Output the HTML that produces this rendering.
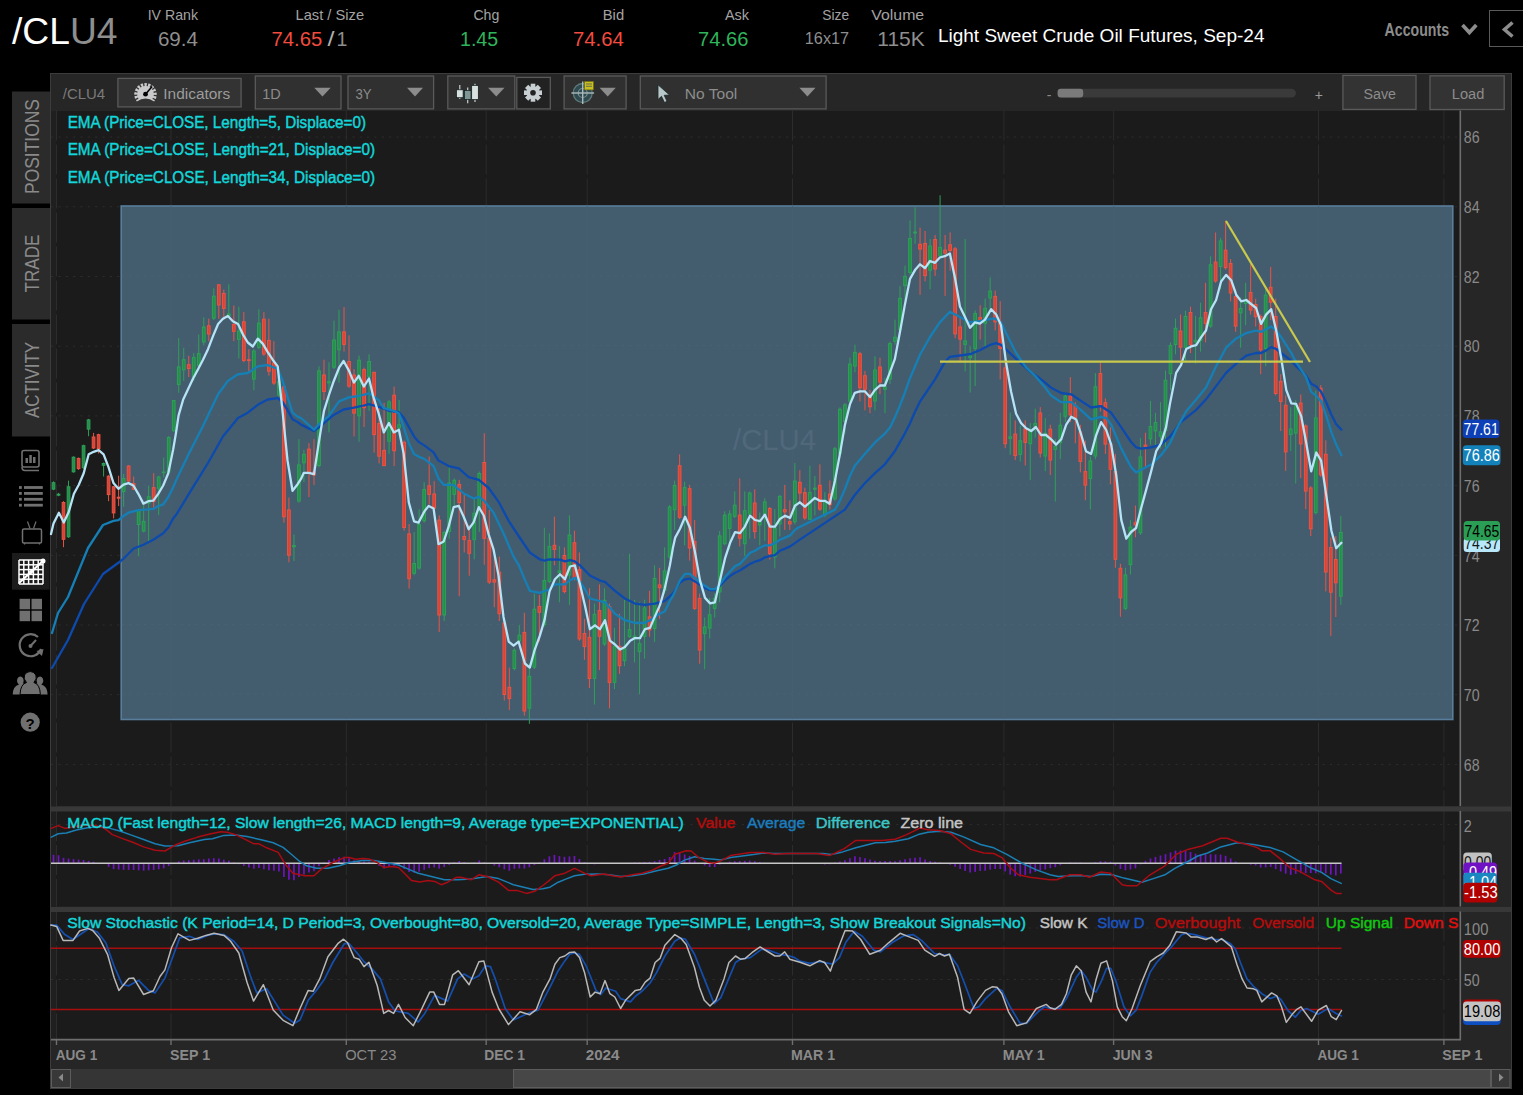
<!DOCTYPE html>
<html><head><meta charset="utf-8"><style>
html,body{margin:0;padding:0;background:#000;width:1523px;height:1095px;overflow:hidden;position:relative}
text{font-family:"Liberation Sans", sans-serif}
</style></head><body>
<svg width="1523" height="1095" viewBox="0 0 1523 1095" style="position:absolute;left:0;top:0">
<rect x="0" y="0" width="1523" height="1095" fill="#000"/>
<text x="12" y="43.5" font-size="36.5" textLength="105.5" lengthAdjust="spacingAndGlyphs"><tspan fill="#ffffff">/CL</tspan><tspan fill="#8e8e8e">U4</tspan></text>
<text x="198" y="20" font-size="14.5" fill="#a3a3a3" text-anchor="end" font-weight="normal" textLength="50.3" lengthAdjust="spacingAndGlyphs" >IV Rank</text>
<text x="198" y="45.7" font-size="19.5" fill="#8e8e8e" text-anchor="end" font-weight="normal" textLength="40.1" lengthAdjust="spacingAndGlyphs" >69.4</text>
<text x="364.1" y="20" font-size="14.5" fill="#a3a3a3" text-anchor="end" font-weight="normal" textLength="68.6" lengthAdjust="spacingAndGlyphs" >Last / Size</text>
<text x="271.6" y="45.7" font-size="19.5" fill="#f24b3f" text-anchor="start" font-weight="normal" textLength="50.7" lengthAdjust="spacingAndGlyphs" >74.65</text>
<text x="327.4" y="45.7" font-size="19.5" fill="#b0b0b0" text-anchor="start" font-weight="normal" textLength="7" lengthAdjust="spacingAndGlyphs" >/</text>
<text x="347.4" y="45.7" font-size="19.5" fill="#8e8e8e" text-anchor="end" font-weight="normal" >1</text>
<text x="499.3" y="20" font-size="14.5" fill="#a3a3a3" text-anchor="end" font-weight="normal" textLength="25.9" lengthAdjust="spacingAndGlyphs" >Chg</text>
<text x="498.1" y="45.7" font-size="19.5" fill="#2fb45b" text-anchor="end" font-weight="normal" textLength="38.1" lengthAdjust="spacingAndGlyphs" >1.45</text>
<text x="624.1" y="20" font-size="14.5" fill="#a3a3a3" text-anchor="end" font-weight="normal" textLength="21.3" lengthAdjust="spacingAndGlyphs" >Bid</text>
<text x="623.8" y="45.7" font-size="19.5" fill="#f24b3f" text-anchor="end" font-weight="normal" textLength="50.9" lengthAdjust="spacingAndGlyphs" >74.64</text>
<text x="749.1" y="20" font-size="14.5" fill="#a3a3a3" text-anchor="end" font-weight="normal" textLength="24.2" lengthAdjust="spacingAndGlyphs" >Ask</text>
<text x="748.4" y="45.7" font-size="19.5" fill="#2fb45b" text-anchor="end" font-weight="normal" textLength="50.4" lengthAdjust="spacingAndGlyphs" >74.66</text>
<text x="849.1" y="20" font-size="14.5" fill="#a3a3a3" text-anchor="end" font-weight="normal" textLength="26.8" lengthAdjust="spacingAndGlyphs" >Size</text>
<text x="849.1" y="43.5" font-size="16" fill="#8e8e8e" text-anchor="end" font-weight="normal" textLength="44.3" lengthAdjust="spacingAndGlyphs" >16x17</text>
<text x="924.2" y="20" font-size="14.5" fill="#a3a3a3" text-anchor="end" font-weight="normal" textLength="52.9" lengthAdjust="spacingAndGlyphs" >Volume</text>
<text x="924.8" y="45.7" font-size="21" fill="#8e8e8e" text-anchor="end" font-weight="normal" textLength="47.5" lengthAdjust="spacingAndGlyphs" >115K</text>
<text x="937.9" y="42.3" font-size="18.3" fill="#ffffff" text-anchor="start" font-weight="normal" textLength="326.6" lengthAdjust="spacingAndGlyphs" >Light Sweet Crude Oil Futures, Sep-24</text>
<text x="1384.6" y="35.6" font-size="18.5" fill="#8c8c8c" text-anchor="start" font-weight="bold" textLength="64.4" lengthAdjust="spacingAndGlyphs" >Accounts</text>
<polyline points="1462.5,25 1469.4,32.5 1476.3,25" fill="none" stroke="#8c8c8c" stroke-width="3.6"/>
<rect x="1489.5" y="10.5" width="40" height="36" fill="none" stroke="#5a5a5a" stroke-width="1"/>
<polyline points="1512.5,22.5 1504.5,29.5 1512.5,36.5" fill="none" stroke="#8c8c8c" stroke-width="3.6"/>
<rect x="12" y="91.5" width="38" height="112" fill="#2b2b2b"/>
<rect x="12" y="208" width="38" height="111.5" fill="#2b2b2b"/>
<rect x="12" y="324" width="38" height="112.5" fill="#2b2b2b"/>
<text x="0" y="0" font-size="20" fill="#8a8a8a" text-anchor="middle" textLength="95" lengthAdjust="spacingAndGlyphs" transform="translate(38.8,146.5) rotate(-90)">POSITIONS</text>
<text x="0" y="0" font-size="20" fill="#8a8a8a" text-anchor="middle" textLength="58" lengthAdjust="spacingAndGlyphs" transform="translate(38.8,263.5) rotate(-90)">TRADE</text>
<text x="0" y="0" font-size="20" fill="#8a8a8a" text-anchor="middle" textLength="76" lengthAdjust="spacingAndGlyphs" transform="translate(38.8,380) rotate(-90)">ACTIVITY</text>
<rect x="50.5" y="73.5" width="1461" height="1015" fill="#262626" stroke="#3c3c3c" stroke-width="1"/>
<rect x="51" y="111" width="1409" height="695" fill="#1b1b1b"/>
<rect x="51" y="811" width="1409" height="95.5" fill="#1b1b1b"/>
<rect x="51" y="911.5" width="1409" height="128" fill="#1b1b1b"/>
<rect x="51" y="111" width="5" height="928.5" fill="#1f1f1f"/>
<line x1="51" y1="764.4" x2="1460" y2="764.4" stroke="#2d2d2d" stroke-width="1" stroke-dasharray="2.2,5.15"/>
<line x1="51" y1="694.7" x2="1460" y2="694.7" stroke="#2d2d2d" stroke-width="1" stroke-dasharray="2.2,5.15"/>
<line x1="51" y1="625.0" x2="1460" y2="625.0" stroke="#2d2d2d" stroke-width="1" stroke-dasharray="2.2,5.15"/>
<line x1="51" y1="555.3" x2="1460" y2="555.3" stroke="#2d2d2d" stroke-width="1" stroke-dasharray="2.2,5.15"/>
<line x1="51" y1="485.6" x2="1460" y2="485.6" stroke="#2d2d2d" stroke-width="1" stroke-dasharray="2.2,5.15"/>
<line x1="51" y1="415.9" x2="1460" y2="415.9" stroke="#2d2d2d" stroke-width="1" stroke-dasharray="2.2,5.15"/>
<line x1="51" y1="346.2" x2="1460" y2="346.2" stroke="#2d2d2d" stroke-width="1" stroke-dasharray="2.2,5.15"/>
<line x1="51" y1="276.5" x2="1460" y2="276.5" stroke="#2d2d2d" stroke-width="1" stroke-dasharray="2.2,5.15"/>
<line x1="51" y1="206.8" x2="1460" y2="206.8" stroke="#2d2d2d" stroke-width="1" stroke-dasharray="2.2,5.15"/>
<line x1="51" y1="137.1" x2="1460" y2="137.1" stroke="#2d2d2d" stroke-width="1" stroke-dasharray="2.2,5.15"/>
<line x1="56.5" y1="110.5" x2="56.5" y2="806" stroke="#2c2c2c" stroke-width="1" stroke-dasharray="30,4"/>
<line x1="56.5" y1="811" x2="56.5" y2="906.5" stroke="#2c2c2c" stroke-width="1" stroke-dasharray="30,4"/>
<line x1="56.5" y1="911.5" x2="56.5" y2="1039.5" stroke="#2c2c2c" stroke-width="1" stroke-dasharray="30,4"/>
<line x1="171" y1="110.5" x2="171" y2="806" stroke="#2c2c2c" stroke-width="1" stroke-dasharray="30,4"/>
<line x1="171" y1="811" x2="171" y2="906.5" stroke="#2c2c2c" stroke-width="1" stroke-dasharray="30,4"/>
<line x1="171" y1="911.5" x2="171" y2="1039.5" stroke="#2c2c2c" stroke-width="1" stroke-dasharray="30,4"/>
<line x1="346.3" y1="110.5" x2="346.3" y2="806" stroke="#2c2c2c" stroke-width="1" stroke-dasharray="30,4"/>
<line x1="346.3" y1="811" x2="346.3" y2="906.5" stroke="#2c2c2c" stroke-width="1" stroke-dasharray="30,4"/>
<line x1="346.3" y1="911.5" x2="346.3" y2="1039.5" stroke="#2c2c2c" stroke-width="1" stroke-dasharray="30,4"/>
<line x1="486.2" y1="110.5" x2="486.2" y2="806" stroke="#2c2c2c" stroke-width="1" stroke-dasharray="30,4"/>
<line x1="486.2" y1="811" x2="486.2" y2="906.5" stroke="#2c2c2c" stroke-width="1" stroke-dasharray="30,4"/>
<line x1="486.2" y1="911.5" x2="486.2" y2="1039.5" stroke="#2c2c2c" stroke-width="1" stroke-dasharray="30,4"/>
<line x1="587.2" y1="110.5" x2="587.2" y2="806" stroke="#2c2c2c" stroke-width="1" stroke-dasharray="30,4"/>
<line x1="587.2" y1="811" x2="587.2" y2="906.5" stroke="#2c2c2c" stroke-width="1" stroke-dasharray="30,4"/>
<line x1="587.2" y1="911.5" x2="587.2" y2="1039.5" stroke="#2c2c2c" stroke-width="1" stroke-dasharray="30,4"/>
<line x1="792.5" y1="110.5" x2="792.5" y2="806" stroke="#2c2c2c" stroke-width="1" stroke-dasharray="30,4"/>
<line x1="792.5" y1="811" x2="792.5" y2="906.5" stroke="#2c2c2c" stroke-width="1" stroke-dasharray="30,4"/>
<line x1="792.5" y1="911.5" x2="792.5" y2="1039.5" stroke="#2c2c2c" stroke-width="1" stroke-dasharray="30,4"/>
<line x1="1003.9" y1="110.5" x2="1003.9" y2="806" stroke="#2c2c2c" stroke-width="1" stroke-dasharray="30,4"/>
<line x1="1003.9" y1="811" x2="1003.9" y2="906.5" stroke="#2c2c2c" stroke-width="1" stroke-dasharray="30,4"/>
<line x1="1003.9" y1="911.5" x2="1003.9" y2="1039.5" stroke="#2c2c2c" stroke-width="1" stroke-dasharray="30,4"/>
<line x1="1113.6" y1="110.5" x2="1113.6" y2="806" stroke="#2c2c2c" stroke-width="1" stroke-dasharray="30,4"/>
<line x1="1113.6" y1="811" x2="1113.6" y2="906.5" stroke="#2c2c2c" stroke-width="1" stroke-dasharray="30,4"/>
<line x1="1113.6" y1="911.5" x2="1113.6" y2="1039.5" stroke="#2c2c2c" stroke-width="1" stroke-dasharray="30,4"/>
<line x1="1318.5" y1="110.5" x2="1318.5" y2="806" stroke="#2c2c2c" stroke-width="1" stroke-dasharray="30,4"/>
<line x1="1318.5" y1="811" x2="1318.5" y2="906.5" stroke="#2c2c2c" stroke-width="1" stroke-dasharray="30,4"/>
<line x1="1318.5" y1="911.5" x2="1318.5" y2="1039.5" stroke="#2c2c2c" stroke-width="1" stroke-dasharray="30,4"/>
<line x1="1443.9" y1="110.5" x2="1443.9" y2="806" stroke="#2c2c2c" stroke-width="1" stroke-dasharray="30,4"/>
<line x1="1443.9" y1="811" x2="1443.9" y2="906.5" stroke="#2c2c2c" stroke-width="1" stroke-dasharray="30,4"/>
<line x1="1443.9" y1="911.5" x2="1443.9" y2="1039.5" stroke="#2c2c2c" stroke-width="1" stroke-dasharray="30,4"/>
<rect x="121.2" y="206" width="1331.6" height="513.5" fill="#435d6f" stroke="#587e9c" stroke-width="1.6"/>
<line x1="122" y1="694.1" x2="1452" y2="694.1" stroke="#4a6274" stroke-width="1" stroke-dasharray="2.2,5.15"/>
<line x1="122" y1="624.4" x2="1452" y2="624.4" stroke="#4a6274" stroke-width="1" stroke-dasharray="2.2,5.15"/>
<line x1="122" y1="554.7" x2="1452" y2="554.7" stroke="#4a6274" stroke-width="1" stroke-dasharray="2.2,5.15"/>
<line x1="122" y1="485.0" x2="1452" y2="485.0" stroke="#4a6274" stroke-width="1" stroke-dasharray="2.2,5.15"/>
<line x1="122" y1="415.3" x2="1452" y2="415.3" stroke="#4a6274" stroke-width="1" stroke-dasharray="2.2,5.15"/>
<line x1="122" y1="345.6" x2="1452" y2="345.6" stroke="#4a6274" stroke-width="1" stroke-dasharray="2.2,5.15"/>
<line x1="122" y1="275.9" x2="1452" y2="275.9" stroke="#4a6274" stroke-width="1" stroke-dasharray="2.2,5.15"/>
<line x1="171" y1="206" x2="171" y2="719" stroke="#475e70" stroke-width="1"/>
<line x1="346.3" y1="206" x2="346.3" y2="719" stroke="#475e70" stroke-width="1"/>
<line x1="486.2" y1="206" x2="486.2" y2="719" stroke="#475e70" stroke-width="1"/>
<line x1="587.2" y1="206" x2="587.2" y2="719" stroke="#475e70" stroke-width="1"/>
<line x1="792.5" y1="206" x2="792.5" y2="719" stroke="#475e70" stroke-width="1"/>
<line x1="1003.9" y1="206" x2="1003.9" y2="719" stroke="#475e70" stroke-width="1"/>
<line x1="1113.6" y1="206" x2="1113.6" y2="719" stroke="#475e70" stroke-width="1"/>
<line x1="1318.5" y1="206" x2="1318.5" y2="719" stroke="#475e70" stroke-width="1"/>
<text x="733" y="450" font-size="29" fill="#51687b" text-anchor="start" font-weight="normal" textLength="83" lengthAdjust="spacingAndGlyphs" >/CLU4</text>
<line x1="53.50" y1="481.4" x2="53.50" y2="490.1" stroke="#2fa057" stroke-width="1"/>
<rect x="52.15" y="482.7" width="2.7" height="6.4" fill="#22904b" stroke="#2fa057" stroke-width="1"/>
<line x1="58.51" y1="492.9" x2="58.51" y2="496.2" stroke="#2fa057" stroke-width="1"/>
<rect x="57.16" y="494.2" width="2.7" height="1.0" fill="#22904b" stroke="#2fa057" stroke-width="1"/>
<line x1="63.52" y1="501.2" x2="63.52" y2="547.2" stroke="#ea5444" stroke-width="1"/>
<rect x="62.17" y="502.5" width="2.7" height="36.8" fill="#da4434" stroke="#ea5444" stroke-width="1"/>
<line x1="68.53" y1="480.6" x2="68.53" y2="537.8" stroke="#2fa057" stroke-width="1"/>
<rect x="67.18" y="486.8" width="2.7" height="50.0" fill="#22904b" stroke="#2fa057" stroke-width="1"/>
<line x1="73.54" y1="456.4" x2="73.54" y2="472.7" stroke="#2fa057" stroke-width="1"/>
<rect x="72.19" y="457.2" width="2.7" height="14.6" fill="#22904b" stroke="#2fa057" stroke-width="1"/>
<line x1="78.55" y1="457.6" x2="78.55" y2="469.9" stroke="#ea5444" stroke-width="1"/>
<rect x="77.20" y="458.4" width="2.7" height="10.2" fill="#da4434" stroke="#ea5444" stroke-width="1"/>
<line x1="83.55" y1="444.7" x2="83.55" y2="468.8" stroke="#2fa057" stroke-width="1"/>
<rect x="82.20" y="445.7" width="2.7" height="22.0" fill="#22904b" stroke="#2fa057" stroke-width="1"/>
<line x1="88.56" y1="418.9" x2="88.56" y2="436.2" stroke="#2fa057" stroke-width="1"/>
<rect x="87.21" y="419.9" width="2.7" height="9.2" fill="#22904b" stroke="#2fa057" stroke-width="1"/>
<line x1="93.57" y1="432.9" x2="93.57" y2="449.0" stroke="#ea5444" stroke-width="1"/>
<rect x="92.22" y="437.0" width="2.7" height="11.0" fill="#da4434" stroke="#ea5444" stroke-width="1"/>
<line x1="98.58" y1="433.7" x2="98.58" y2="453.5" stroke="#ea5444" stroke-width="1"/>
<rect x="97.23" y="434.7" width="2.7" height="13.8" fill="#da4434" stroke="#ea5444" stroke-width="1"/>
<line x1="103.59" y1="462.5" x2="103.59" y2="476.5" stroke="#2fa057" stroke-width="1"/>
<rect x="102.24" y="463.5" width="2.7" height="1.8" fill="#22904b" stroke="#2fa057" stroke-width="1"/>
<line x1="108.60" y1="475.2" x2="108.60" y2="501.2" stroke="#ea5444" stroke-width="1"/>
<rect x="107.25" y="476.2" width="2.7" height="18.4" fill="#da4434" stroke="#ea5444" stroke-width="1"/>
<line x1="113.61" y1="485.9" x2="113.61" y2="518.4" stroke="#ea5444" stroke-width="1"/>
<rect x="112.26" y="486.8" width="2.7" height="26.1" fill="#da4434" stroke="#ea5444" stroke-width="1"/>
<line x1="118.62" y1="475.7" x2="118.62" y2="506.1" stroke="#ea5444" stroke-width="1"/>
<rect x="117.27" y="497.2" width="2.7" height="1.0" fill="#da4434" stroke="#ea5444" stroke-width="1"/>
<line x1="123.63" y1="474.0" x2="123.63" y2="506.9" stroke="#2fa057" stroke-width="1"/>
<rect x="122.28" y="478.6" width="2.7" height="13.0" fill="#22904b" stroke="#2fa057" stroke-width="1"/>
<line x1="128.63" y1="465.1" x2="128.63" y2="481.9" stroke="#ea5444" stroke-width="1"/>
<rect x="127.28" y="466.0" width="2.7" height="15.0" fill="#da4434" stroke="#ea5444" stroke-width="1"/>
<line x1="133.64" y1="476.5" x2="133.64" y2="490.1" stroke="#ea5444" stroke-width="1"/>
<rect x="132.29" y="483.6" width="2.7" height="5.6" fill="#da4434" stroke="#ea5444" stroke-width="1"/>
<line x1="138.65" y1="509.4" x2="138.65" y2="556.2" stroke="#2fa057" stroke-width="1"/>
<rect x="137.30" y="510.7" width="2.7" height="13.8" fill="#22904b" stroke="#2fa057" stroke-width="1"/>
<line x1="143.66" y1="502.0" x2="143.66" y2="532.4" stroke="#2fa057" stroke-width="1"/>
<rect x="142.31" y="521.4" width="2.7" height="9.7" fill="#22904b" stroke="#2fa057" stroke-width="1"/>
<line x1="148.67" y1="485.5" x2="148.67" y2="541.4" stroke="#2fa057" stroke-width="1"/>
<rect x="147.32" y="496.7" width="2.7" height="6.4" fill="#22904b" stroke="#2fa057" stroke-width="1"/>
<line x1="153.68" y1="473.2" x2="153.68" y2="507.7" stroke="#ea5444" stroke-width="1"/>
<rect x="152.33" y="487.7" width="2.7" height="13.8" fill="#da4434" stroke="#ea5444" stroke-width="1"/>
<line x1="158.69" y1="475.7" x2="158.69" y2="515.1" stroke="#2fa057" stroke-width="1"/>
<rect x="157.34" y="477.0" width="2.7" height="11.3" fill="#22904b" stroke="#2fa057" stroke-width="1"/>
<line x1="163.70" y1="457.6" x2="163.70" y2="477.3" stroke="#2fa057" stroke-width="1"/>
<rect x="162.35" y="472.0" width="2.7" height="0.6" fill="#22904b" stroke="#2fa057" stroke-width="1"/>
<line x1="168.71" y1="436.2" x2="168.71" y2="473.2" stroke="#2fa057" stroke-width="1"/>
<rect x="167.36" y="437.5" width="2.7" height="34.4" fill="#22904b" stroke="#2fa057" stroke-width="1"/>
<line x1="173.72" y1="400.0" x2="173.72" y2="432.1" stroke="#2fa057" stroke-width="1"/>
<rect x="172.37" y="400.5" width="2.7" height="30.2" fill="#22904b" stroke="#2fa057" stroke-width="1"/>
<line x1="178.73" y1="338.0" x2="178.73" y2="392.8" stroke="#2fa057" stroke-width="1"/>
<rect x="177.38" y="366.9" width="2.7" height="17.5" fill="#22904b" stroke="#2fa057" stroke-width="1"/>
<line x1="183.73" y1="347.8" x2="183.73" y2="380.9" stroke="#2fa057" stroke-width="1"/>
<rect x="182.38" y="359.7" width="2.7" height="10.1" fill="#22904b" stroke="#2fa057" stroke-width="1"/>
<line x1="188.74" y1="355.8" x2="188.74" y2="377.0" stroke="#ea5444" stroke-width="1"/>
<rect x="187.39" y="364.7" width="2.7" height="3.8" fill="#da4434" stroke="#ea5444" stroke-width="1"/>
<line x1="193.75" y1="353.1" x2="193.75" y2="380.9" stroke="#2fa057" stroke-width="1"/>
<rect x="192.40" y="357.6" width="2.7" height="18.9" fill="#22904b" stroke="#2fa057" stroke-width="1"/>
<line x1="198.76" y1="334.6" x2="198.76" y2="370.3" stroke="#2fa057" stroke-width="1"/>
<rect x="197.41" y="353.6" width="2.7" height="12.2" fill="#22904b" stroke="#2fa057" stroke-width="1"/>
<line x1="203.77" y1="317.4" x2="203.77" y2="345.2" stroke="#2fa057" stroke-width="1"/>
<rect x="202.42" y="327.1" width="2.7" height="14.9" fill="#22904b" stroke="#2fa057" stroke-width="1"/>
<line x1="208.78" y1="318.7" x2="208.78" y2="341.2" stroke="#ea5444" stroke-width="1"/>
<rect x="207.43" y="325.8" width="2.7" height="8.3" fill="#da4434" stroke="#ea5444" stroke-width="1"/>
<line x1="213.79" y1="288.2" x2="213.79" y2="320.0" stroke="#2fa057" stroke-width="1"/>
<rect x="212.44" y="296.2" width="2.7" height="22.0" fill="#22904b" stroke="#2fa057" stroke-width="1"/>
<line x1="218.80" y1="284.3" x2="218.80" y2="318.7" stroke="#ea5444" stroke-width="1"/>
<rect x="217.45" y="284.8" width="2.7" height="20.2" fill="#da4434" stroke="#ea5444" stroke-width="1"/>
<line x1="223.81" y1="289.6" x2="223.81" y2="320.0" stroke="#ea5444" stroke-width="1"/>
<rect x="222.46" y="293.5" width="2.7" height="14.9" fill="#da4434" stroke="#ea5444" stroke-width="1"/>
<line x1="228.81" y1="284.3" x2="228.81" y2="317.4" stroke="#2fa057" stroke-width="1"/>
<rect x="227.47" y="313.9" width="2.7" height="1.6" fill="#22904b" stroke="#2fa057" stroke-width="1"/>
<line x1="233.82" y1="305.5" x2="233.82" y2="341.2" stroke="#ea5444" stroke-width="1"/>
<rect x="232.47" y="324.5" width="2.7" height="6.9" fill="#da4434" stroke="#ea5444" stroke-width="1"/>
<line x1="238.83" y1="306.8" x2="238.83" y2="358.4" stroke="#2fa057" stroke-width="1"/>
<rect x="237.48" y="331.1" width="2.7" height="8.3" fill="#22904b" stroke="#2fa057" stroke-width="1"/>
<line x1="243.84" y1="312.1" x2="243.84" y2="362.4" stroke="#ea5444" stroke-width="1"/>
<rect x="242.49" y="321.8" width="2.7" height="38.7" fill="#da4434" stroke="#ea5444" stroke-width="1"/>
<line x1="248.85" y1="349.2" x2="248.85" y2="371.7" stroke="#ea5444" stroke-width="1"/>
<rect x="247.50" y="359.7" width="2.7" height="0.9" fill="#da4434" stroke="#ea5444" stroke-width="1"/>
<line x1="253.86" y1="349.2" x2="253.86" y2="390.2" stroke="#2fa057" stroke-width="1"/>
<rect x="252.51" y="351.0" width="2.7" height="28.1" fill="#22904b" stroke="#2fa057" stroke-width="1"/>
<line x1="258.87" y1="309.4" x2="258.87" y2="349.2" stroke="#2fa057" stroke-width="1"/>
<rect x="257.52" y="323.2" width="2.7" height="24.2" fill="#22904b" stroke="#2fa057" stroke-width="1"/>
<line x1="263.88" y1="312.1" x2="263.88" y2="355.8" stroke="#ea5444" stroke-width="1"/>
<rect x="262.53" y="319.2" width="2.7" height="34.8" fill="#da4434" stroke="#ea5444" stroke-width="1"/>
<line x1="268.89" y1="318.7" x2="268.89" y2="375.6" stroke="#ea5444" stroke-width="1"/>
<rect x="267.54" y="340.4" width="2.7" height="30.8" fill="#da4434" stroke="#ea5444" stroke-width="1"/>
<line x1="273.90" y1="341.2" x2="273.90" y2="384.9" stroke="#ea5444" stroke-width="1"/>
<rect x="272.55" y="362.9" width="2.7" height="20.2" fill="#da4434" stroke="#ea5444" stroke-width="1"/>
<line x1="278.91" y1="378.3" x2="278.91" y2="396.8" stroke="#2fa057" stroke-width="1"/>
<rect x="277.56" y="381.4" width="2.7" height="13.6" fill="#22904b" stroke="#2fa057" stroke-width="1"/>
<line x1="283.91" y1="384.9" x2="283.91" y2="522.6" stroke="#ea5444" stroke-width="1"/>
<rect x="282.56" y="386.7" width="2.7" height="130.1" fill="#da4434" stroke="#ea5444" stroke-width="1"/>
<line x1="288.92" y1="497.5" x2="288.92" y2="562.3" stroke="#ea5444" stroke-width="1"/>
<rect x="287.57" y="509.9" width="2.7" height="45.3" fill="#da4434" stroke="#ea5444" stroke-width="1"/>
<line x1="293.93" y1="534.5" x2="293.93" y2="561.0" stroke="#2fa057" stroke-width="1"/>
<rect x="292.58" y="545.6" width="2.7" height="1.1" fill="#22904b" stroke="#2fa057" stroke-width="1"/>
<line x1="298.94" y1="439.2" x2="298.94" y2="502.8" stroke="#2fa057" stroke-width="1"/>
<rect x="297.59" y="464.9" width="2.7" height="36.1" fill="#22904b" stroke="#2fa057" stroke-width="1"/>
<line x1="303.95" y1="449.9" x2="303.95" y2="482.2" stroke="#2fa057" stroke-width="1"/>
<rect x="302.60" y="454.4" width="2.7" height="8.4" fill="#22904b" stroke="#2fa057" stroke-width="1"/>
<line x1="308.96" y1="443.2" x2="308.96" y2="497.0" stroke="#ea5444" stroke-width="1"/>
<rect x="307.61" y="449.1" width="2.7" height="23.2" fill="#da4434" stroke="#ea5444" stroke-width="1"/>
<line x1="313.97" y1="439.1" x2="313.97" y2="484.9" stroke="#ea5444" stroke-width="1"/>
<rect x="312.62" y="472.0" width="2.7" height="3.0" fill="#da4434" stroke="#ea5444" stroke-width="1"/>
<line x1="318.98" y1="366.4" x2="318.98" y2="467.4" stroke="#2fa057" stroke-width="1"/>
<rect x="317.63" y="370.9" width="2.7" height="94.6" fill="#22904b" stroke="#2fa057" stroke-width="1"/>
<line x1="323.99" y1="359.7" x2="323.99" y2="400.1" stroke="#ea5444" stroke-width="1"/>
<rect x="322.64" y="375.0" width="2.7" height="16.5" fill="#da4434" stroke="#ea5444" stroke-width="1"/>
<line x1="329.00" y1="362.3" x2="329.00" y2="432.4" stroke="#2fa057" stroke-width="1"/>
<rect x="327.64" y="381.7" width="2.7" height="1.2" fill="#22904b" stroke="#2fa057" stroke-width="1"/>
<line x1="334.00" y1="320.6" x2="334.00" y2="369.1" stroke="#2fa057" stroke-width="1"/>
<rect x="332.65" y="340.0" width="2.7" height="27.3" fill="#22904b" stroke="#2fa057" stroke-width="1"/>
<line x1="339.01" y1="309.8" x2="339.01" y2="382.6" stroke="#2fa057" stroke-width="1"/>
<rect x="337.66" y="331.9" width="2.7" height="17.9" fill="#22904b" stroke="#2fa057" stroke-width="1"/>
<line x1="344.02" y1="307.1" x2="344.02" y2="351.6" stroke="#ea5444" stroke-width="1"/>
<rect x="342.67" y="331.9" width="2.7" height="12.5" fill="#da4434" stroke="#ea5444" stroke-width="1"/>
<line x1="349.03" y1="335.4" x2="349.03" y2="387.9" stroke="#ea5444" stroke-width="1"/>
<rect x="347.68" y="361.5" width="2.7" height="24.6" fill="#da4434" stroke="#ea5444" stroke-width="1"/>
<line x1="354.04" y1="369.1" x2="354.04" y2="436.4" stroke="#ea5444" stroke-width="1"/>
<rect x="352.69" y="375.0" width="2.7" height="38.1" fill="#da4434" stroke="#ea5444" stroke-width="1"/>
<line x1="359.05" y1="355.6" x2="359.05" y2="441.8" stroke="#2fa057" stroke-width="1"/>
<rect x="357.70" y="360.2" width="2.7" height="55.6" fill="#22904b" stroke="#2fa057" stroke-width="1"/>
<line x1="364.06" y1="367.7" x2="364.06" y2="427.0" stroke="#ea5444" stroke-width="1"/>
<rect x="362.71" y="369.6" width="2.7" height="38.1" fill="#da4434" stroke="#ea5444" stroke-width="1"/>
<line x1="369.07" y1="354.3" x2="369.07" y2="410.8" stroke="#2fa057" stroke-width="1"/>
<rect x="367.72" y="361.5" width="2.7" height="15.2" fill="#22904b" stroke="#2fa057" stroke-width="1"/>
<line x1="374.08" y1="371.8" x2="374.08" y2="452.6" stroke="#ea5444" stroke-width="1"/>
<rect x="372.73" y="372.3" width="2.7" height="62.3" fill="#da4434" stroke="#ea5444" stroke-width="1"/>
<line x1="379.09" y1="408.1" x2="379.09" y2="463.4" stroke="#ea5444" stroke-width="1"/>
<rect x="377.74" y="423.5" width="2.7" height="32.7" fill="#da4434" stroke="#ea5444" stroke-width="1"/>
<line x1="384.09" y1="402.8" x2="384.09" y2="466.1" stroke="#ea5444" stroke-width="1"/>
<rect x="382.74" y="450.4" width="2.7" height="15.2" fill="#da4434" stroke="#ea5444" stroke-width="1"/>
<line x1="389.10" y1="400.1" x2="389.10" y2="453.9" stroke="#2fa057" stroke-width="1"/>
<rect x="387.75" y="401.9" width="2.7" height="39.4" fill="#22904b" stroke="#2fa057" stroke-width="1"/>
<line x1="394.11" y1="386.6" x2="394.11" y2="466.1" stroke="#ea5444" stroke-width="1"/>
<rect x="392.76" y="395.2" width="2.7" height="55.6" fill="#da4434" stroke="#ea5444" stroke-width="1"/>
<line x1="399.12" y1="400.1" x2="399.12" y2="429.7" stroke="#2fa057" stroke-width="1"/>
<rect x="397.77" y="424.8" width="2.7" height="3.0" fill="#22904b" stroke="#2fa057" stroke-width="1"/>
<line x1="404.13" y1="440.5" x2="404.13" y2="530.7" stroke="#ea5444" stroke-width="1"/>
<rect x="402.78" y="442.3" width="2.7" height="85.2" fill="#da4434" stroke="#ea5444" stroke-width="1"/>
<line x1="409.14" y1="524.0" x2="409.14" y2="588.6" stroke="#ea5444" stroke-width="1"/>
<rect x="407.79" y="533.9" width="2.7" height="44.8" fill="#da4434" stroke="#ea5444" stroke-width="1"/>
<line x1="414.15" y1="532.1" x2="414.15" y2="575.2" stroke="#2fa057" stroke-width="1"/>
<rect x="412.80" y="563.5" width="2.7" height="9.8" fill="#22904b" stroke="#2fa057" stroke-width="1"/>
<line x1="419.16" y1="509.2" x2="419.16" y2="569.8" stroke="#2fa057" stroke-width="1"/>
<rect x="417.81" y="524.5" width="2.7" height="43.5" fill="#22904b" stroke="#2fa057" stroke-width="1"/>
<line x1="424.17" y1="482.2" x2="424.17" y2="522.6" stroke="#2fa057" stroke-width="1"/>
<rect x="422.82" y="489.5" width="2.7" height="31.3" fill="#22904b" stroke="#2fa057" stroke-width="1"/>
<line x1="429.18" y1="456.5" x2="429.18" y2="504.5" stroke="#ea5444" stroke-width="1"/>
<rect x="427.82" y="485.8" width="2.7" height="8.6" fill="#da4434" stroke="#ea5444" stroke-width="1"/>
<line x1="434.18" y1="481.2" x2="434.18" y2="515.5" stroke="#ea5444" stroke-width="1"/>
<rect x="432.83" y="494.0" width="2.7" height="14.1" fill="#da4434" stroke="#ea5444" stroke-width="1"/>
<line x1="439.19" y1="515.5" x2="439.19" y2="632.0" stroke="#ea5444" stroke-width="1"/>
<rect x="437.84" y="520.1" width="2.7" height="94.9" fill="#da4434" stroke="#ea5444" stroke-width="1"/>
<line x1="444.20" y1="530.5" x2="444.20" y2="621.0" stroke="#2fa057" stroke-width="1"/>
<rect x="442.85" y="532.4" width="2.7" height="82.6" fill="#22904b" stroke="#2fa057" stroke-width="1"/>
<line x1="449.21" y1="467.5" x2="449.21" y2="538.8" stroke="#2fa057" stroke-width="1"/>
<rect x="447.86" y="483.1" width="2.7" height="48.3" fill="#22904b" stroke="#2fa057" stroke-width="1"/>
<line x1="454.22" y1="478.5" x2="454.22" y2="507.2" stroke="#2fa057" stroke-width="1"/>
<rect x="452.87" y="480.3" width="2.7" height="14.1" fill="#22904b" stroke="#2fa057" stroke-width="1"/>
<line x1="459.23" y1="479.8" x2="459.23" y2="596.3" stroke="#ea5444" stroke-width="1"/>
<rect x="457.88" y="484.4" width="2.7" height="18.2" fill="#da4434" stroke="#ea5444" stroke-width="1"/>
<line x1="464.24" y1="494.9" x2="464.24" y2="552.5" stroke="#ea5444" stroke-width="1"/>
<rect x="462.89" y="536.5" width="2.7" height="3.1" fill="#da4434" stroke="#ea5444" stroke-width="1"/>
<line x1="469.25" y1="525.1" x2="469.25" y2="575.8" stroke="#ea5444" stroke-width="1"/>
<rect x="467.90" y="540.6" width="2.7" height="12.7" fill="#da4434" stroke="#ea5444" stroke-width="1"/>
<line x1="474.26" y1="499.0" x2="474.26" y2="559.3" stroke="#2fa057" stroke-width="1"/>
<rect x="472.91" y="513.2" width="2.7" height="26.4" fill="#22904b" stroke="#2fa057" stroke-width="1"/>
<line x1="479.27" y1="471.6" x2="479.27" y2="531.9" stroke="#2fa057" stroke-width="1"/>
<rect x="477.92" y="473.5" width="2.7" height="34.6" fill="#22904b" stroke="#2fa057" stroke-width="1"/>
<line x1="484.27" y1="433.2" x2="484.27" y2="564.8" stroke="#ea5444" stroke-width="1"/>
<rect x="482.92" y="462.5" width="2.7" height="75.8" fill="#da4434" stroke="#ea5444" stroke-width="1"/>
<line x1="489.28" y1="510.0" x2="489.28" y2="584.0" stroke="#ea5444" stroke-width="1"/>
<rect x="487.93" y="537.9" width="2.7" height="44.2" fill="#da4434" stroke="#ea5444" stroke-width="1"/>
<line x1="494.29" y1="556.6" x2="494.29" y2="607.3" stroke="#ea5444" stroke-width="1"/>
<rect x="492.94" y="579.8" width="2.7" height="2.3" fill="#da4434" stroke="#ea5444" stroke-width="1"/>
<line x1="499.30" y1="556.6" x2="499.30" y2="621.0" stroke="#ea5444" stroke-width="1"/>
<rect x="497.95" y="572.2" width="2.7" height="41.5" fill="#da4434" stroke="#ea5444" stroke-width="1"/>
<line x1="504.31" y1="621.0" x2="504.31" y2="700.5" stroke="#ea5444" stroke-width="1"/>
<rect x="502.96" y="622.9" width="2.7" height="71.6" fill="#da4434" stroke="#ea5444" stroke-width="1"/>
<line x1="509.32" y1="667.6" x2="509.32" y2="710.1" stroke="#ea5444" stroke-width="1"/>
<rect x="507.97" y="687.3" width="2.7" height="11.3" fill="#da4434" stroke="#ea5444" stroke-width="1"/>
<line x1="514.33" y1="648.4" x2="514.33" y2="670.3" stroke="#2fa057" stroke-width="1"/>
<rect x="512.98" y="650.3" width="2.7" height="18.2" fill="#22904b" stroke="#2fa057" stroke-width="1"/>
<line x1="519.34" y1="625.1" x2="519.34" y2="644.3" stroke="#2fa057" stroke-width="1"/>
<rect x="517.99" y="635.2" width="2.7" height="5.9" fill="#22904b" stroke="#2fa057" stroke-width="1"/>
<line x1="524.35" y1="612.8" x2="524.35" y2="715.6" stroke="#ea5444" stroke-width="1"/>
<rect x="523.00" y="632.5" width="2.7" height="78.5" fill="#da4434" stroke="#ea5444" stroke-width="1"/>
<line x1="529.36" y1="663.5" x2="529.36" y2="723.8" stroke="#2fa057" stroke-width="1"/>
<rect x="528.00" y="676.3" width="2.7" height="31.9" fill="#22904b" stroke="#2fa057" stroke-width="1"/>
<line x1="534.36" y1="593.6" x2="534.36" y2="669.0" stroke="#2fa057" stroke-width="1"/>
<rect x="533.01" y="609.2" width="2.7" height="57.9" fill="#22904b" stroke="#2fa057" stroke-width="1"/>
<line x1="539.37" y1="595.0" x2="539.37" y2="641.6" stroke="#ea5444" stroke-width="1"/>
<rect x="538.02" y="606.4" width="2.7" height="5.9" fill="#da4434" stroke="#ea5444" stroke-width="1"/>
<line x1="544.38" y1="527.8" x2="544.38" y2="626.5" stroke="#2fa057" stroke-width="1"/>
<rect x="543.03" y="580.4" width="2.7" height="44.2" fill="#22904b" stroke="#2fa057" stroke-width="1"/>
<line x1="549.39" y1="533.3" x2="549.39" y2="583.1" stroke="#2fa057" stroke-width="1"/>
<rect x="548.04" y="546.6" width="2.7" height="34.8" fill="#22904b" stroke="#2fa057" stroke-width="1"/>
<line x1="554.40" y1="516.7" x2="554.40" y2="565.3" stroke="#ea5444" stroke-width="1"/>
<rect x="553.05" y="545.3" width="2.7" height="4.1" fill="#da4434" stroke="#ea5444" stroke-width="1"/>
<line x1="559.41" y1="546.1" x2="559.41" y2="602.3" stroke="#2fa057" stroke-width="1"/>
<rect x="558.06" y="570.9" width="2.7" height="1.6" fill="#22904b" stroke="#2fa057" stroke-width="1"/>
<line x1="564.42" y1="547.4" x2="564.42" y2="593.4" stroke="#ea5444" stroke-width="1"/>
<rect x="563.07" y="555.5" width="2.7" height="36.1" fill="#da4434" stroke="#ea5444" stroke-width="1"/>
<line x1="569.43" y1="515.4" x2="569.43" y2="604.9" stroke="#2fa057" stroke-width="1"/>
<rect x="568.08" y="535.1" width="2.7" height="39.9" fill="#22904b" stroke="#2fa057" stroke-width="1"/>
<line x1="574.44" y1="530.7" x2="574.44" y2="580.6" stroke="#ea5444" stroke-width="1"/>
<rect x="573.09" y="542.7" width="2.7" height="34.8" fill="#da4434" stroke="#ea5444" stroke-width="1"/>
<line x1="579.45" y1="552.5" x2="579.45" y2="640.7" stroke="#ea5444" stroke-width="1"/>
<rect x="578.10" y="569.6" width="2.7" height="69.3" fill="#da4434" stroke="#ea5444" stroke-width="1"/>
<line x1="584.45" y1="618.9" x2="584.45" y2="659.8" stroke="#ea5444" stroke-width="1"/>
<rect x="583.10" y="633.5" width="2.7" height="13.1" fill="#da4434" stroke="#ea5444" stroke-width="1"/>
<line x1="589.46" y1="588.3" x2="589.46" y2="688.0" stroke="#ea5444" stroke-width="1"/>
<rect x="588.11" y="637.3" width="2.7" height="41.2" fill="#da4434" stroke="#ea5444" stroke-width="1"/>
<line x1="594.47" y1="603.6" x2="594.47" y2="704.6" stroke="#2fa057" stroke-width="1"/>
<rect x="593.12" y="614.3" width="2.7" height="64.2" fill="#22904b" stroke="#2fa057" stroke-width="1"/>
<line x1="599.48" y1="584.4" x2="599.48" y2="670.1" stroke="#ea5444" stroke-width="1"/>
<rect x="598.13" y="610.5" width="2.7" height="25.8" fill="#da4434" stroke="#ea5444" stroke-width="1"/>
<line x1="604.49" y1="588.3" x2="604.49" y2="645.8" stroke="#2fa057" stroke-width="1"/>
<rect x="603.14" y="600.3" width="2.7" height="43.7" fill="#22904b" stroke="#2fa057" stroke-width="1"/>
<line x1="609.50" y1="603.6" x2="609.50" y2="708.4" stroke="#ea5444" stroke-width="1"/>
<rect x="608.15" y="606.7" width="2.7" height="75.7" fill="#da4434" stroke="#ea5444" stroke-width="1"/>
<line x1="614.51" y1="627.9" x2="614.51" y2="689.2" stroke="#2fa057" stroke-width="1"/>
<rect x="613.16" y="646.3" width="2.7" height="36.1" fill="#22904b" stroke="#2fa057" stroke-width="1"/>
<line x1="619.52" y1="613.8" x2="619.52" y2="673.9" stroke="#ea5444" stroke-width="1"/>
<rect x="618.17" y="646.3" width="2.7" height="19.4" fill="#da4434" stroke="#ea5444" stroke-width="1"/>
<line x1="624.53" y1="599.8" x2="624.53" y2="666.2" stroke="#2fa057" stroke-width="1"/>
<rect x="623.18" y="648.8" width="2.7" height="11.8" fill="#22904b" stroke="#2fa057" stroke-width="1"/>
<line x1="629.54" y1="553.8" x2="629.54" y2="638.1" stroke="#2fa057" stroke-width="1"/>
<rect x="628.19" y="629.7" width="2.7" height="6.7" fill="#22904b" stroke="#2fa057" stroke-width="1"/>
<line x1="634.54" y1="599.8" x2="634.54" y2="662.4" stroke="#2fa057" stroke-width="1"/>
<rect x="633.19" y="636.1" width="2.7" height="2.8" fill="#22904b" stroke="#2fa057" stroke-width="1"/>
<line x1="639.55" y1="602.3" x2="639.55" y2="694.3" stroke="#2fa057" stroke-width="1"/>
<rect x="638.20" y="643.7" width="2.7" height="7.9" fill="#22904b" stroke="#2fa057" stroke-width="1"/>
<line x1="644.56" y1="599.8" x2="644.56" y2="658.6" stroke="#2fa057" stroke-width="1"/>
<rect x="643.21" y="607.9" width="2.7" height="28.4" fill="#22904b" stroke="#2fa057" stroke-width="1"/>
<line x1="649.57" y1="590.8" x2="649.57" y2="636.8" stroke="#ea5444" stroke-width="1"/>
<rect x="648.22" y="616.9" width="2.7" height="13.1" fill="#da4434" stroke="#ea5444" stroke-width="1"/>
<line x1="654.58" y1="565.3" x2="654.58" y2="641.9" stroke="#2fa057" stroke-width="1"/>
<rect x="653.23" y="578.5" width="2.7" height="50.1" fill="#22904b" stroke="#2fa057" stroke-width="1"/>
<line x1="659.59" y1="567.8" x2="659.59" y2="618.9" stroke="#ea5444" stroke-width="1"/>
<rect x="658.24" y="584.9" width="2.7" height="2.8" fill="#da4434" stroke="#ea5444" stroke-width="1"/>
<line x1="664.60" y1="547.4" x2="664.60" y2="593.4" stroke="#2fa057" stroke-width="1"/>
<rect x="663.25" y="570.9" width="2.7" height="19.4" fill="#22904b" stroke="#2fa057" stroke-width="1"/>
<line x1="669.61" y1="505.2" x2="669.61" y2="558.9" stroke="#2fa057" stroke-width="1"/>
<rect x="668.26" y="507.0" width="2.7" height="50.1" fill="#22904b" stroke="#2fa057" stroke-width="1"/>
<line x1="674.62" y1="480.6" x2="674.62" y2="529.9" stroke="#2fa057" stroke-width="1"/>
<rect x="673.27" y="485.5" width="2.7" height="24.2" fill="#22904b" stroke="#2fa057" stroke-width="1"/>
<line x1="679.62" y1="454.3" x2="679.62" y2="518.9" stroke="#ea5444" stroke-width="1"/>
<rect x="678.27" y="465.7" width="2.7" height="51.6" fill="#da4434" stroke="#ea5444" stroke-width="1"/>
<line x1="684.63" y1="481.7" x2="684.63" y2="545.3" stroke="#2fa057" stroke-width="1"/>
<rect x="683.28" y="487.6" width="2.7" height="17.6" fill="#22904b" stroke="#2fa057" stroke-width="1"/>
<line x1="689.64" y1="485.0" x2="689.64" y2="560.6" stroke="#ea5444" stroke-width="1"/>
<rect x="688.29" y="488.7" width="2.7" height="59.3" fill="#da4434" stroke="#ea5444" stroke-width="1"/>
<line x1="694.65" y1="520.0" x2="694.65" y2="610.0" stroke="#ea5444" stroke-width="1"/>
<rect x="693.30" y="541.4" width="2.7" height="67.0" fill="#da4434" stroke="#ea5444" stroke-width="1"/>
<line x1="699.66" y1="593.5" x2="699.66" y2="663.7" stroke="#ea5444" stroke-width="1"/>
<rect x="698.31" y="598.4" width="2.7" height="51.6" fill="#da4434" stroke="#ea5444" stroke-width="1"/>
<line x1="704.67" y1="617.6" x2="704.67" y2="669.2" stroke="#2fa057" stroke-width="1"/>
<rect x="703.32" y="626.9" width="2.7" height="6.7" fill="#22904b" stroke="#2fa057" stroke-width="1"/>
<line x1="709.68" y1="597.9" x2="709.68" y2="638.5" stroke="#2fa057" stroke-width="1"/>
<rect x="708.33" y="614.8" width="2.7" height="13.3" fill="#22904b" stroke="#2fa057" stroke-width="1"/>
<line x1="714.69" y1="593.5" x2="714.69" y2="617.6" stroke="#2fa057" stroke-width="1"/>
<rect x="713.34" y="598.4" width="2.7" height="10.0" fill="#22904b" stroke="#2fa057" stroke-width="1"/>
<line x1="719.70" y1="531.0" x2="719.70" y2="602.3" stroke="#2fa057" stroke-width="1"/>
<rect x="718.35" y="535.9" width="2.7" height="56.0" fill="#22904b" stroke="#2fa057" stroke-width="1"/>
<line x1="724.71" y1="511.3" x2="724.71" y2="545.3" stroke="#2fa057" stroke-width="1"/>
<rect x="723.36" y="515.1" width="2.7" height="28.6" fill="#22904b" stroke="#2fa057" stroke-width="1"/>
<line x1="729.72" y1="510.2" x2="729.72" y2="549.6" stroke="#2fa057" stroke-width="1"/>
<rect x="728.37" y="514.0" width="2.7" height="14.4" fill="#22904b" stroke="#2fa057" stroke-width="1"/>
<line x1="734.72" y1="491.5" x2="734.72" y2="517.9" stroke="#2fa057" stroke-width="1"/>
<rect x="733.37" y="505.2" width="2.7" height="11.1" fill="#22904b" stroke="#2fa057" stroke-width="1"/>
<line x1="739.73" y1="478.4" x2="739.73" y2="546.4" stroke="#ea5444" stroke-width="1"/>
<rect x="738.38" y="515.1" width="2.7" height="23.1" fill="#da4434" stroke="#ea5444" stroke-width="1"/>
<line x1="744.74" y1="491.5" x2="744.74" y2="556.2" stroke="#2fa057" stroke-width="1"/>
<rect x="743.39" y="510.7" width="2.7" height="33.0" fill="#22904b" stroke="#2fa057" stroke-width="1"/>
<line x1="749.75" y1="491.5" x2="749.75" y2="538.7" stroke="#2fa057" stroke-width="1"/>
<rect x="748.40" y="493.1" width="2.7" height="20.9" fill="#22904b" stroke="#2fa057" stroke-width="1"/>
<line x1="754.76" y1="489.3" x2="754.76" y2="538.7" stroke="#ea5444" stroke-width="1"/>
<rect x="753.41" y="503.0" width="2.7" height="28.6" fill="#da4434" stroke="#ea5444" stroke-width="1"/>
<line x1="759.77" y1="512.4" x2="759.77" y2="545.3" stroke="#2fa057" stroke-width="1"/>
<rect x="758.42" y="521.6" width="2.7" height="3.4" fill="#22904b" stroke="#2fa057" stroke-width="1"/>
<line x1="764.78" y1="498.1" x2="764.78" y2="540.9" stroke="#2fa057" stroke-width="1"/>
<rect x="763.43" y="501.9" width="2.7" height="13.3" fill="#22904b" stroke="#2fa057" stroke-width="1"/>
<line x1="769.79" y1="506.9" x2="769.79" y2="559.5" stroke="#ea5444" stroke-width="1"/>
<rect x="768.44" y="508.5" width="2.7" height="45.1" fill="#da4434" stroke="#ea5444" stroke-width="1"/>
<line x1="774.80" y1="509.1" x2="774.80" y2="568.3" stroke="#2fa057" stroke-width="1"/>
<rect x="773.45" y="528.2" width="2.7" height="28.6" fill="#22904b" stroke="#2fa057" stroke-width="1"/>
<line x1="779.81" y1="494.8" x2="779.81" y2="536.5" stroke="#2fa057" stroke-width="1"/>
<rect x="778.46" y="496.4" width="2.7" height="27.5" fill="#22904b" stroke="#2fa057" stroke-width="1"/>
<line x1="784.81" y1="485.0" x2="784.81" y2="529.9" stroke="#ea5444" stroke-width="1"/>
<rect x="783.46" y="509.6" width="2.7" height="2.3" fill="#da4434" stroke="#ea5444" stroke-width="1"/>
<line x1="789.82" y1="500.3" x2="789.82" y2="529.9" stroke="#ea5444" stroke-width="1"/>
<rect x="788.47" y="521.6" width="2.7" height="2.3" fill="#da4434" stroke="#ea5444" stroke-width="1"/>
<line x1="794.83" y1="463.0" x2="794.83" y2="524.4" stroke="#2fa057" stroke-width="1"/>
<rect x="793.48" y="481.1" width="2.7" height="40.7" fill="#22904b" stroke="#2fa057" stroke-width="1"/>
<line x1="799.84" y1="470.2" x2="799.84" y2="503.7" stroke="#ea5444" stroke-width="1"/>
<rect x="798.49" y="482.3" width="2.7" height="10.7" fill="#da4434" stroke="#ea5444" stroke-width="1"/>
<line x1="804.85" y1="487.7" x2="804.85" y2="519.8" stroke="#ea5444" stroke-width="1"/>
<rect x="803.50" y="492.6" width="2.7" height="25.3" fill="#da4434" stroke="#ea5444" stroke-width="1"/>
<line x1="809.86" y1="465.8" x2="809.86" y2="519.8" stroke="#2fa057" stroke-width="1"/>
<rect x="808.51" y="492.6" width="2.7" height="26.7" fill="#22904b" stroke="#2fa057" stroke-width="1"/>
<line x1="814.87" y1="476.0" x2="814.87" y2="515.4" stroke="#2fa057" stroke-width="1"/>
<rect x="813.52" y="488.2" width="2.7" height="1.0" fill="#22904b" stroke="#2fa057" stroke-width="1"/>
<line x1="819.88" y1="464.3" x2="819.88" y2="511.0" stroke="#ea5444" stroke-width="1"/>
<rect x="818.53" y="485.3" width="2.7" height="23.8" fill="#da4434" stroke="#ea5444" stroke-width="1"/>
<line x1="824.89" y1="492.1" x2="824.89" y2="516.9" stroke="#2fa057" stroke-width="1"/>
<rect x="823.54" y="501.3" width="2.7" height="13.6" fill="#22904b" stroke="#2fa057" stroke-width="1"/>
<line x1="829.90" y1="480.4" x2="829.90" y2="509.6" stroke="#ea5444" stroke-width="1"/>
<rect x="828.55" y="494.0" width="2.7" height="10.7" fill="#da4434" stroke="#ea5444" stroke-width="1"/>
<line x1="834.90" y1="446.8" x2="834.90" y2="500.8" stroke="#2fa057" stroke-width="1"/>
<rect x="833.55" y="448.7" width="2.7" height="50.1" fill="#22904b" stroke="#2fa057" stroke-width="1"/>
<line x1="839.91" y1="407.4" x2="839.91" y2="457.0" stroke="#2fa057" stroke-width="1"/>
<rect x="838.56" y="409.3" width="2.7" height="44.3" fill="#22904b" stroke="#2fa057" stroke-width="1"/>
<line x1="844.92" y1="403.0" x2="844.92" y2="433.6" stroke="#2fa057" stroke-width="1"/>
<rect x="843.57" y="404.9" width="2.7" height="16.5" fill="#22904b" stroke="#2fa057" stroke-width="1"/>
<line x1="849.93" y1="357.7" x2="849.93" y2="403.0" stroke="#2fa057" stroke-width="1"/>
<rect x="848.58" y="364.1" width="2.7" height="37.0" fill="#22904b" stroke="#2fa057" stroke-width="1"/>
<line x1="854.94" y1="344.6" x2="854.94" y2="372.3" stroke="#2fa057" stroke-width="1"/>
<rect x="853.59" y="352.4" width="2.7" height="13.6" fill="#22904b" stroke="#2fa057" stroke-width="1"/>
<line x1="859.95" y1="351.9" x2="859.95" y2="401.5" stroke="#ea5444" stroke-width="1"/>
<rect x="858.60" y="353.8" width="2.7" height="34.0" fill="#da4434" stroke="#ea5444" stroke-width="1"/>
<line x1="864.96" y1="370.9" x2="864.96" y2="410.3" stroke="#ea5444" stroke-width="1"/>
<rect x="863.61" y="375.7" width="2.7" height="13.6" fill="#da4434" stroke="#ea5444" stroke-width="1"/>
<line x1="869.97" y1="389.8" x2="869.97" y2="413.2" stroke="#ea5444" stroke-width="1"/>
<rect x="868.62" y="394.7" width="2.7" height="12.1" fill="#da4434" stroke="#ea5444" stroke-width="1"/>
<line x1="874.98" y1="356.2" x2="874.98" y2="410.3" stroke="#2fa057" stroke-width="1"/>
<rect x="873.63" y="369.9" width="2.7" height="31.1" fill="#22904b" stroke="#2fa057" stroke-width="1"/>
<line x1="879.99" y1="357.7" x2="879.99" y2="394.2" stroke="#ea5444" stroke-width="1"/>
<rect x="878.63" y="367.0" width="2.7" height="15.1" fill="#da4434" stroke="#ea5444" stroke-width="1"/>
<line x1="884.99" y1="378.2" x2="884.99" y2="413.2" stroke="#2fa057" stroke-width="1"/>
<rect x="883.64" y="386.8" width="2.7" height="2.5" fill="#22904b" stroke="#2fa057" stroke-width="1"/>
<line x1="890.00" y1="341.6" x2="890.00" y2="384.0" stroke="#2fa057" stroke-width="1"/>
<rect x="888.65" y="343.6" width="2.7" height="35.5" fill="#22904b" stroke="#2fa057" stroke-width="1"/>
<line x1="895.01" y1="319.7" x2="895.01" y2="344.6" stroke="#2fa057" stroke-width="1"/>
<rect x="893.66" y="337.2" width="2.7" height="4.0" fill="#22904b" stroke="#2fa057" stroke-width="1"/>
<line x1="900.02" y1="286.2" x2="900.02" y2="331.4" stroke="#2fa057" stroke-width="1"/>
<rect x="898.67" y="298.3" width="2.7" height="31.1" fill="#22904b" stroke="#2fa057" stroke-width="1"/>
<line x1="905.03" y1="265.7" x2="905.03" y2="300.8" stroke="#2fa057" stroke-width="1"/>
<rect x="903.68" y="276.4" width="2.7" height="9.2" fill="#22904b" stroke="#2fa057" stroke-width="1"/>
<line x1="910.04" y1="220.4" x2="910.04" y2="274.5" stroke="#2fa057" stroke-width="1"/>
<rect x="908.69" y="238.5" width="2.7" height="34.0" fill="#22904b" stroke="#2fa057" stroke-width="1"/>
<line x1="915.05" y1="207.3" x2="915.05" y2="243.8" stroke="#2fa057" stroke-width="1"/>
<rect x="913.70" y="232.0" width="2.7" height="1.0" fill="#22904b" stroke="#2fa057" stroke-width="1"/>
<line x1="920.06" y1="227.7" x2="920.06" y2="294.9" stroke="#ea5444" stroke-width="1"/>
<rect x="918.71" y="244.3" width="2.7" height="4.8" fill="#da4434" stroke="#ea5444" stroke-width="1"/>
<line x1="925.07" y1="231.0" x2="925.07" y2="281.4" stroke="#ea5444" stroke-width="1"/>
<rect x="923.72" y="243.5" width="2.7" height="32.1" fill="#da4434" stroke="#ea5444" stroke-width="1"/>
<line x1="930.08" y1="239.0" x2="930.08" y2="289.3" stroke="#2fa057" stroke-width="1"/>
<rect x="928.73" y="246.1" width="2.7" height="24.2" fill="#22904b" stroke="#2fa057" stroke-width="1"/>
<line x1="935.08" y1="235.0" x2="935.08" y2="276.1" stroke="#ea5444" stroke-width="1"/>
<rect x="933.73" y="239.5" width="2.7" height="29.5" fill="#da4434" stroke="#ea5444" stroke-width="1"/>
<line x1="940.09" y1="195.3" x2="940.09" y2="257.5" stroke="#2fa057" stroke-width="1"/>
<rect x="938.74" y="247.4" width="2.7" height="8.3" fill="#22904b" stroke="#2fa057" stroke-width="1"/>
<line x1="945.10" y1="235.0" x2="945.10" y2="295.9" stroke="#ea5444" stroke-width="1"/>
<rect x="943.75" y="250.1" width="2.7" height="3.0" fill="#da4434" stroke="#ea5444" stroke-width="1"/>
<line x1="950.11" y1="232.4" x2="950.11" y2="270.8" stroke="#ea5444" stroke-width="1"/>
<rect x="948.76" y="244.8" width="2.7" height="5.6" fill="#da4434" stroke="#ea5444" stroke-width="1"/>
<line x1="955.12" y1="246.9" x2="955.12" y2="338.3" stroke="#ea5444" stroke-width="1"/>
<rect x="953.77" y="248.8" width="2.7" height="85.1" fill="#da4434" stroke="#ea5444" stroke-width="1"/>
<line x1="960.13" y1="317.1" x2="960.13" y2="362.1" stroke="#ea5444" stroke-width="1"/>
<rect x="958.78" y="326.9" width="2.7" height="12.2" fill="#da4434" stroke="#ea5444" stroke-width="1"/>
<line x1="965.14" y1="239.0" x2="965.14" y2="371.4" stroke="#2fa057" stroke-width="1"/>
<rect x="963.79" y="340.9" width="2.7" height="3.5" fill="#22904b" stroke="#2fa057" stroke-width="1"/>
<line x1="970.15" y1="346.2" x2="970.15" y2="392.6" stroke="#2fa057" stroke-width="1"/>
<rect x="968.80" y="356.0" width="2.7" height="1.6" fill="#22904b" stroke="#2fa057" stroke-width="1"/>
<line x1="975.16" y1="310.5" x2="975.16" y2="386.0" stroke="#2fa057" stroke-width="1"/>
<rect x="973.81" y="313.6" width="2.7" height="34.8" fill="#22904b" stroke="#2fa057" stroke-width="1"/>
<line x1="980.17" y1="305.2" x2="980.17" y2="339.6" stroke="#ea5444" stroke-width="1"/>
<rect x="978.82" y="317.6" width="2.7" height="3.0" fill="#da4434" stroke="#ea5444" stroke-width="1"/>
<line x1="985.17" y1="298.6" x2="985.17" y2="346.2" stroke="#2fa057" stroke-width="1"/>
<rect x="983.82" y="308.3" width="2.7" height="14.9" fill="#22904b" stroke="#2fa057" stroke-width="1"/>
<line x1="990.18" y1="277.4" x2="990.18" y2="309.2" stroke="#2fa057" stroke-width="1"/>
<rect x="988.83" y="291.1" width="2.7" height="6.9" fill="#22904b" stroke="#2fa057" stroke-width="1"/>
<line x1="995.19" y1="290.6" x2="995.19" y2="330.4" stroke="#ea5444" stroke-width="1"/>
<rect x="993.84" y="296.4" width="2.7" height="25.5" fill="#da4434" stroke="#ea5444" stroke-width="1"/>
<line x1="1000.20" y1="301.2" x2="1000.20" y2="379.4" stroke="#ea5444" stroke-width="1"/>
<rect x="998.85" y="321.6" width="2.7" height="26.8" fill="#da4434" stroke="#ea5444" stroke-width="1"/>
<line x1="1005.21" y1="348.9" x2="1005.21" y2="448.2" stroke="#ea5444" stroke-width="1"/>
<rect x="1003.86" y="367.9" width="2.7" height="75.8" fill="#da4434" stroke="#ea5444" stroke-width="1"/>
<line x1="1010.22" y1="412.5" x2="1010.22" y2="454.8" stroke="#2fa057" stroke-width="1"/>
<rect x="1008.87" y="436.8" width="2.7" height="1.6" fill="#22904b" stroke="#2fa057" stroke-width="1"/>
<line x1="1015.23" y1="420.4" x2="1015.23" y2="460.1" stroke="#ea5444" stroke-width="1"/>
<rect x="1013.88" y="434.1" width="2.7" height="21.5" fill="#da4434" stroke="#ea5444" stroke-width="1"/>
<line x1="1020.24" y1="425.7" x2="1020.24" y2="461.5" stroke="#2fa057" stroke-width="1"/>
<rect x="1018.89" y="440.8" width="2.7" height="13.6" fill="#22904b" stroke="#2fa057" stroke-width="1"/>
<line x1="1025.25" y1="420.4" x2="1025.25" y2="465.4" stroke="#ea5444" stroke-width="1"/>
<rect x="1023.90" y="428.8" width="2.7" height="13.6" fill="#da4434" stroke="#ea5444" stroke-width="1"/>
<line x1="1030.26" y1="423.1" x2="1030.26" y2="480.0" stroke="#2fa057" stroke-width="1"/>
<rect x="1028.91" y="431.5" width="2.7" height="12.2" fill="#22904b" stroke="#2fa057" stroke-width="1"/>
<line x1="1035.26" y1="408.5" x2="1035.26" y2="437.6" stroke="#2fa057" stroke-width="1"/>
<rect x="1033.91" y="423.6" width="2.7" height="3.0" fill="#22904b" stroke="#2fa057" stroke-width="1"/>
<line x1="1040.27" y1="407.2" x2="1040.27" y2="457.5" stroke="#ea5444" stroke-width="1"/>
<rect x="1038.92" y="413.0" width="2.7" height="40.0" fill="#da4434" stroke="#ea5444" stroke-width="1"/>
<line x1="1045.28" y1="418.1" x2="1045.28" y2="471.1" stroke="#2fa057" stroke-width="1"/>
<rect x="1043.93" y="433.2" width="2.7" height="22.8" fill="#22904b" stroke="#2fa057" stroke-width="1"/>
<line x1="1050.29" y1="424.7" x2="1050.29" y2="475.1" stroke="#ea5444" stroke-width="1"/>
<rect x="1048.94" y="429.2" width="2.7" height="30.8" fill="#da4434" stroke="#ea5444" stroke-width="1"/>
<line x1="1055.30" y1="439.3" x2="1055.30" y2="501.5" stroke="#2fa057" stroke-width="1"/>
<rect x="1053.95" y="446.4" width="2.7" height="3.0" fill="#22904b" stroke="#2fa057" stroke-width="1"/>
<line x1="1060.31" y1="412.8" x2="1060.31" y2="459.2" stroke="#2fa057" stroke-width="1"/>
<rect x="1058.96" y="425.2" width="2.7" height="17.5" fill="#22904b" stroke="#2fa057" stroke-width="1"/>
<line x1="1065.32" y1="393.0" x2="1065.32" y2="422.1" stroke="#2fa057" stroke-width="1"/>
<rect x="1063.97" y="396.1" width="2.7" height="20.2" fill="#22904b" stroke="#2fa057" stroke-width="1"/>
<line x1="1070.33" y1="377.1" x2="1070.33" y2="422.1" stroke="#ea5444" stroke-width="1"/>
<rect x="1068.98" y="396.1" width="2.7" height="18.9" fill="#da4434" stroke="#ea5444" stroke-width="1"/>
<line x1="1075.34" y1="402.2" x2="1075.34" y2="443.3" stroke="#ea5444" stroke-width="1"/>
<rect x="1073.99" y="405.4" width="2.7" height="12.2" fill="#da4434" stroke="#ea5444" stroke-width="1"/>
<line x1="1080.35" y1="424.7" x2="1080.35" y2="472.4" stroke="#ea5444" stroke-width="1"/>
<rect x="1079.00" y="431.9" width="2.7" height="29.5" fill="#da4434" stroke="#ea5444" stroke-width="1"/>
<line x1="1085.35" y1="440.6" x2="1085.35" y2="500.2" stroke="#ea5444" stroke-width="1"/>
<rect x="1084.00" y="471.6" width="2.7" height="13.6" fill="#da4434" stroke="#ea5444" stroke-width="1"/>
<line x1="1090.36" y1="456.5" x2="1090.36" y2="509.5" stroke="#2fa057" stroke-width="1"/>
<rect x="1089.01" y="461.0" width="2.7" height="17.5" fill="#22904b" stroke="#2fa057" stroke-width="1"/>
<line x1="1095.37" y1="373.1" x2="1095.37" y2="459.2" stroke="#2fa057" stroke-width="1"/>
<rect x="1094.02" y="386.8" width="2.7" height="69.2" fill="#22904b" stroke="#2fa057" stroke-width="1"/>
<line x1="1100.38" y1="362.5" x2="1100.38" y2="411.5" stroke="#ea5444" stroke-width="1"/>
<rect x="1099.03" y="373.6" width="2.7" height="30.8" fill="#da4434" stroke="#ea5444" stroke-width="1"/>
<line x1="1105.39" y1="398.3" x2="1105.39" y2="453.9" stroke="#ea5444" stroke-width="1"/>
<rect x="1104.04" y="402.7" width="2.7" height="41.4" fill="#da4434" stroke="#ea5444" stroke-width="1"/>
<line x1="1110.40" y1="427.4" x2="1110.40" y2="484.3" stroke="#ea5444" stroke-width="1"/>
<rect x="1109.05" y="443.8" width="2.7" height="25.5" fill="#da4434" stroke="#ea5444" stroke-width="1"/>
<line x1="1115.41" y1="453.9" x2="1115.41" y2="567.8" stroke="#ea5444" stroke-width="1"/>
<rect x="1114.06" y="471.6" width="2.7" height="87.7" fill="#da4434" stroke="#ea5444" stroke-width="1"/>
<line x1="1120.42" y1="563.8" x2="1120.42" y2="616.7" stroke="#ea5444" stroke-width="1"/>
<rect x="1119.07" y="568.3" width="2.7" height="29.5" fill="#da4434" stroke="#ea5444" stroke-width="1"/>
<line x1="1125.43" y1="567.8" x2="1125.43" y2="610.1" stroke="#2fa057" stroke-width="1"/>
<rect x="1124.08" y="574.9" width="2.7" height="33.4" fill="#22904b" stroke="#2fa057" stroke-width="1"/>
<line x1="1130.44" y1="520.1" x2="1130.44" y2="574.4" stroke="#2fa057" stroke-width="1"/>
<rect x="1129.09" y="527.2" width="2.7" height="37.4" fill="#22904b" stroke="#2fa057" stroke-width="1"/>
<line x1="1135.44" y1="505.5" x2="1135.44" y2="537.3" stroke="#ea5444" stroke-width="1"/>
<rect x="1134.09" y="522.7" width="2.7" height="2.2" fill="#da4434" stroke="#ea5444" stroke-width="1"/>
<line x1="1140.45" y1="438.0" x2="1140.45" y2="534.7" stroke="#2fa057" stroke-width="1"/>
<rect x="1139.10" y="457.0" width="2.7" height="75.8" fill="#22904b" stroke="#2fa057" stroke-width="1"/>
<line x1="1145.46" y1="432.7" x2="1145.46" y2="467.1" stroke="#ea5444" stroke-width="1"/>
<rect x="1144.11" y="445.1" width="2.7" height="1.6" fill="#da4434" stroke="#ea5444" stroke-width="1"/>
<line x1="1150.47" y1="400.9" x2="1150.47" y2="444.6" stroke="#2fa057" stroke-width="1"/>
<rect x="1149.12" y="426.6" width="2.7" height="12.2" fill="#22904b" stroke="#2fa057" stroke-width="1"/>
<line x1="1155.48" y1="412.8" x2="1155.48" y2="445.9" stroke="#2fa057" stroke-width="1"/>
<rect x="1154.13" y="422.6" width="2.7" height="8.3" fill="#22904b" stroke="#2fa057" stroke-width="1"/>
<line x1="1160.49" y1="402.2" x2="1160.49" y2="448.6" stroke="#2fa057" stroke-width="1"/>
<rect x="1159.14" y="431.9" width="2.7" height="4.3" fill="#22904b" stroke="#2fa057" stroke-width="1"/>
<line x1="1165.50" y1="370.5" x2="1165.50" y2="447.3" stroke="#2fa057" stroke-width="1"/>
<rect x="1164.15" y="380.2" width="2.7" height="50.6" fill="#22904b" stroke="#2fa057" stroke-width="1"/>
<line x1="1170.51" y1="342.4" x2="1170.51" y2="390.1" stroke="#2fa057" stroke-width="1"/>
<rect x="1169.16" y="345.6" width="2.7" height="28.1" fill="#22904b" stroke="#2fa057" stroke-width="1"/>
<line x1="1175.52" y1="318.6" x2="1175.52" y2="354.3" stroke="#2fa057" stroke-width="1"/>
<rect x="1174.17" y="328.3" width="2.7" height="16.2" fill="#22904b" stroke="#2fa057" stroke-width="1"/>
<line x1="1180.53" y1="314.6" x2="1180.53" y2="359.6" stroke="#ea5444" stroke-width="1"/>
<rect x="1179.18" y="331.0" width="2.7" height="16.2" fill="#da4434" stroke="#ea5444" stroke-width="1"/>
<line x1="1185.53" y1="310.6" x2="1185.53" y2="362.3" stroke="#2fa057" stroke-width="1"/>
<rect x="1184.18" y="316.4" width="2.7" height="30.8" fill="#22904b" stroke="#2fa057" stroke-width="1"/>
<line x1="1190.54" y1="306.7" x2="1190.54" y2="353.0" stroke="#ea5444" stroke-width="1"/>
<rect x="1189.19" y="312.5" width="2.7" height="32.1" fill="#da4434" stroke="#ea5444" stroke-width="1"/>
<line x1="1195.55" y1="315.9" x2="1195.55" y2="363.6" stroke="#2fa057" stroke-width="1"/>
<rect x="1194.20" y="340.3" width="2.7" height="1.6" fill="#22904b" stroke="#2fa057" stroke-width="1"/>
<line x1="1200.56" y1="302.7" x2="1200.56" y2="351.7" stroke="#2fa057" stroke-width="1"/>
<rect x="1199.21" y="317.8" width="2.7" height="22.8" fill="#22904b" stroke="#2fa057" stroke-width="1"/>
<line x1="1205.57" y1="282.8" x2="1205.57" y2="342.4" stroke="#ea5444" stroke-width="1"/>
<rect x="1204.22" y="312.5" width="2.7" height="10.9" fill="#da4434" stroke="#ea5444" stroke-width="1"/>
<line x1="1210.58" y1="256.3" x2="1210.58" y2="327.8" stroke="#2fa057" stroke-width="1"/>
<rect x="1209.23" y="264.8" width="2.7" height="61.2" fill="#22904b" stroke="#2fa057" stroke-width="1"/>
<line x1="1215.59" y1="232.5" x2="1215.59" y2="282.8" stroke="#ea5444" stroke-width="1"/>
<rect x="1214.24" y="262.1" width="2.7" height="18.9" fill="#da4434" stroke="#ea5444" stroke-width="1"/>
<line x1="1220.60" y1="237.8" x2="1220.60" y2="289.4" stroke="#2fa057" stroke-width="1"/>
<rect x="1219.25" y="241.0" width="2.7" height="25.5" fill="#22904b" stroke="#2fa057" stroke-width="1"/>
<line x1="1225.61" y1="220.6" x2="1225.61" y2="269.6" stroke="#ea5444" stroke-width="1"/>
<rect x="1224.26" y="250.2" width="2.7" height="17.5" fill="#da4434" stroke="#ea5444" stroke-width="1"/>
<line x1="1230.62" y1="259.0" x2="1230.62" y2="301.4" stroke="#ea5444" stroke-width="1"/>
<rect x="1229.27" y="263.5" width="2.7" height="29.5" fill="#da4434" stroke="#ea5444" stroke-width="1"/>
<line x1="1235.62" y1="289.4" x2="1235.62" y2="331.8" stroke="#ea5444" stroke-width="1"/>
<rect x="1234.27" y="296.6" width="2.7" height="29.5" fill="#da4434" stroke="#ea5444" stroke-width="1"/>
<line x1="1240.63" y1="297.4" x2="1240.63" y2="347.7" stroke="#2fa057" stroke-width="1"/>
<rect x="1239.28" y="308.5" width="2.7" height="4.3" fill="#22904b" stroke="#2fa057" stroke-width="1"/>
<line x1="1245.64" y1="282.8" x2="1245.64" y2="325.2" stroke="#2fa057" stroke-width="1"/>
<rect x="1244.29" y="300.5" width="2.7" height="3.0" fill="#22904b" stroke="#2fa057" stroke-width="1"/>
<line x1="1250.65" y1="264.3" x2="1250.65" y2="314.6" stroke="#ea5444" stroke-width="1"/>
<rect x="1249.30" y="292.6" width="2.7" height="17.5" fill="#da4434" stroke="#ea5444" stroke-width="1"/>
<line x1="1255.66" y1="298.7" x2="1255.66" y2="326.5" stroke="#ea5444" stroke-width="1"/>
<rect x="1254.31" y="304.5" width="2.7" height="12.2" fill="#da4434" stroke="#ea5444" stroke-width="1"/>
<line x1="1260.67" y1="314.6" x2="1260.67" y2="374.2" stroke="#ea5444" stroke-width="1"/>
<rect x="1259.32" y="316.4" width="2.7" height="33.4" fill="#da4434" stroke="#ea5444" stroke-width="1"/>
<line x1="1265.68" y1="289.4" x2="1265.68" y2="366.2" stroke="#2fa057" stroke-width="1"/>
<rect x="1264.33" y="295.2" width="2.7" height="53.3" fill="#22904b" stroke="#2fa057" stroke-width="1"/>
<line x1="1270.69" y1="266.9" x2="1270.69" y2="319.9" stroke="#ea5444" stroke-width="1"/>
<rect x="1269.34" y="287.3" width="2.7" height="14.9" fill="#da4434" stroke="#ea5444" stroke-width="1"/>
<line x1="1275.70" y1="298.7" x2="1275.70" y2="395.4" stroke="#ea5444" stroke-width="1"/>
<rect x="1274.35" y="316.4" width="2.7" height="77.1" fill="#da4434" stroke="#ea5444" stroke-width="1"/>
<line x1="1280.71" y1="374.2" x2="1280.71" y2="431.1" stroke="#ea5444" stroke-width="1"/>
<rect x="1279.36" y="381.3" width="2.7" height="20.2" fill="#da4434" stroke="#ea5444" stroke-width="1"/>
<line x1="1285.71" y1="395.4" x2="1285.71" y2="470.9" stroke="#ea5444" stroke-width="1"/>
<rect x="1284.36" y="405.2" width="2.7" height="46.7" fill="#da4434" stroke="#ea5444" stroke-width="1"/>
<line x1="1290.72" y1="407.3" x2="1290.72" y2="451.0" stroke="#2fa057" stroke-width="1"/>
<rect x="1289.37" y="429.0" width="2.7" height="5.6" fill="#22904b" stroke="#2fa057" stroke-width="1"/>
<line x1="1295.73" y1="399.9" x2="1295.73" y2="483.5" stroke="#2fa057" stroke-width="1"/>
<rect x="1294.38" y="405.8" width="2.7" height="27.3" fill="#22904b" stroke="#2fa057" stroke-width="1"/>
<line x1="1300.74" y1="394.5" x2="1300.74" y2="478.1" stroke="#ea5444" stroke-width="1"/>
<rect x="1299.39" y="403.1" width="2.7" height="40.8" fill="#da4434" stroke="#ea5444" stroke-width="1"/>
<line x1="1305.75" y1="424.2" x2="1305.75" y2="509.1" stroke="#ea5444" stroke-width="1"/>
<rect x="1304.40" y="426.0" width="2.7" height="65.1" fill="#da4434" stroke="#ea5444" stroke-width="1"/>
<line x1="1310.76" y1="486.2" x2="1310.76" y2="536.1" stroke="#ea5444" stroke-width="1"/>
<rect x="1309.41" y="488.0" width="2.7" height="40.8" fill="#da4434" stroke="#ea5444" stroke-width="1"/>
<line x1="1315.77" y1="390.5" x2="1315.77" y2="514.5" stroke="#2fa057" stroke-width="1"/>
<rect x="1314.42" y="417.9" width="2.7" height="94.7" fill="#22904b" stroke="#2fa057" stroke-width="1"/>
<line x1="1320.78" y1="385.1" x2="1320.78" y2="476.8" stroke="#ea5444" stroke-width="1"/>
<rect x="1319.43" y="388.3" width="2.7" height="86.6" fill="#da4434" stroke="#ea5444" stroke-width="1"/>
<line x1="1325.79" y1="440.3" x2="1325.79" y2="591.4" stroke="#ea5444" stroke-width="1"/>
<rect x="1324.44" y="454.3" width="2.7" height="117.7" fill="#da4434" stroke="#ea5444" stroke-width="1"/>
<line x1="1330.80" y1="537.4" x2="1330.80" y2="635.9" stroke="#ea5444" stroke-width="1"/>
<rect x="1329.45" y="547.4" width="2.7" height="44.8" fill="#da4434" stroke="#ea5444" stroke-width="1"/>
<line x1="1335.80" y1="536.1" x2="1335.80" y2="617.0" stroke="#ea5444" stroke-width="1"/>
<rect x="1334.45" y="559.5" width="2.7" height="23.3" fill="#da4434" stroke="#ea5444" stroke-width="1"/>
<line x1="1340.81" y1="515.9" x2="1340.81" y2="604.9" stroke="#2fa057" stroke-width="1"/>
<rect x="1339.46" y="532.5" width="2.7" height="63.7" fill="#22904b" stroke="#2fa057" stroke-width="1"/>
<polyline points="52.0,668.0 68.0,640.0 84.0,604.0 103.0,574.0 118.4,562.8 123.5,558.7 133.4,548.8 143.4,544.7 153.3,539.8 163.2,533.2 168.3,527.5 173.2,518.4 176.0,515.1 193.2,486.9 208.0,463.0 222.9,436.5 238.0,418.0 247.8,412.7 257.8,404.8 267.6,399.5 277.7,398.1 282.7,402.1 287.5,410.1 292.5,419.3 297.6,422.0 301.0,424.6 314.0,431.0 324.0,423.0 333.7,414.9 343.6,409.5 353.9,407.6 363.8,405.5 369.0,404.1 378.7,406.8 388.9,410.8 398.9,412.2 403.7,417.6 414.0,436.4 418.5,441.8 425.0,445.9 433.6,452.4 438.5,460.6 448.7,466.1 458.8,468.3 468.7,477.1 478.8,479.8 488.7,488.0 498.6,501.8 508.7,520.9 518.6,536.0 529.8,552.5 539.7,559.3 544.6,560.7 549.0,559.3 560.0,559.6 564.9,561.4 570.0,560.1 574.8,561.4 580.0,565.3 589.9,575.5 599.9,580.6 605.0,581.9 615.0,590.8 624.9,598.5 634.9,603.6 644.9,604.9 654.9,603.6 664.8,601.0 673.0,593.4 680.0,582.5 685.1,579.3 689.9,578.6 694.9,581.4 700.0,584.7 705.0,588.0 710.1,590.2 714.9,590.2 719.9,585.8 725.0,580.4 730.0,576.0 735.1,572.7 739.9,570.5 744.9,567.2 750.0,563.9 755.0,561.7 760.1,560.2 764.9,557.3 769.9,556.2 775.0,555.1 780.0,550.7 785.1,548.6 790.1,546.4 794.9,543.1 798.0,540.9 844.9,509.6 854.8,495.0 864.8,483.3 875.0,473.1 884.9,464.3 894.8,451.2 899.8,442.4 904.8,433.6 910.0,423.4 915.0,411.7 920.0,401.5 935.0,379.4 944.8,362.1 949.9,356.8 959.9,355.5 970.0,354.2 979.8,350.2 989.9,344.9 996.2,343.1 1001.0,344.9 1011.0,354.2 1021.1,363.5 1031.2,372.7 1035.9,375.4 1046.0,383.3 1051.1,387.7 1061.2,393.0 1071.2,394.3 1081.0,400.9 1091.1,407.5 1101.1,406.2 1111.2,412.8 1121.3,427.4 1131.1,442.0 1136.1,447.3 1141.1,448.6 1151.2,447.3 1161.0,444.6 1170.0,436.7 1181.1,421.9 1196.2,409.9 1206.0,399.4 1216.1,386.1 1226.1,372.9 1236.2,363.6 1246.3,355.7 1256.1,353.0 1261.1,353.0 1266.1,350.4 1271.2,347.2 1276.2,349.0 1281.2,353.0 1286.3,357.0 1291.3,361.0 1296.1,366.2 1306.0,375.6 1311.2,383.7 1316.3,386.4 1321.1,391.8 1326.3,402.6 1331.4,414.7 1336.2,424.2 1341.4,429.6" fill="none" stroke="#0d4aae" stroke-width="2.3" stroke-linejoin="round" stroke-linecap="round" />
<polyline points="52.0,633.0 58.0,613.0 68.0,597.0 88.0,548.0 103.0,525.0 113.5,520.9 118.4,520.1 123.5,516.0 128.5,512.7 138.3,510.2 148.4,509.4 153.3,508.9 158.2,506.1 163.2,504.4 168.3,497.0 173.2,487.2 176.0,480.6 188.2,455.1 203.0,426.0 218.1,394.2 227.9,380.9 238.0,374.3 247.8,373.0 257.8,366.4 267.6,365.0 277.7,369.0 282.7,380.9 287.5,396.8 292.5,412.7 297.6,416.7 301.0,418.0 314.0,429.7 318.9,424.3 328.6,416.2 339.1,401.4 348.8,397.4 358.7,396.0 369.0,393.3 378.7,400.1 383.8,408.1 393.8,410.8 398.9,413.5 403.7,427.0 408.8,443.2 414.0,453.9 418.5,456.6 425.0,459.3 433.6,466.1 438.5,478.5 443.7,484.8 453.6,484.8 463.7,493.5 473.6,498.5 478.8,496.8 483.8,500.4 493.6,512.7 503.5,533.3 513.6,556.6 518.6,564.8 524.9,579.9 529.8,590.8 539.7,592.8 549.0,589.5 554.9,584.4 564.9,584.4 570.0,580.1 574.8,578.0 580.0,581.9 585.1,589.5 589.9,598.5 599.9,601.0 605.0,602.3 615.0,613.8 624.9,620.2 634.9,622.8 644.9,622.8 650.0,620.2 660.0,613.8 664.8,611.3 669.9,601.0 673.0,595.9 680.0,580.4 685.1,573.8 689.9,573.8 694.9,578.2 700.0,582.5 705.0,585.8 710.1,589.1 714.9,589.1 719.9,584.7 725.0,577.1 730.0,571.6 735.1,566.1 739.9,563.9 744.9,558.4 750.0,552.9 755.0,550.7 760.1,547.5 764.9,545.3 769.9,545.3 775.0,543.1 780.0,539.8 785.1,537.6 790.1,535.4 794.9,529.9 798.0,527.7 835.0,509.6 839.9,500.8 844.9,489.1 849.9,476.0 854.8,465.8 864.8,454.1 875.0,442.4 884.9,433.6 889.9,427.8 894.8,417.6 899.8,405.9 904.8,392.8 910.0,378.2 915.0,366.5 920.0,354.8 930.0,337.0 939.8,322.4 949.9,311.8 959.9,317.1 970.0,322.4 979.8,321.1 984.8,319.8 994.6,318.4 1001.0,322.4 1006.0,333.0 1016.1,352.9 1026.1,367.4 1035.9,376.7 1046.0,388.6 1051.1,395.6 1061.2,402.2 1071.2,402.2 1081.0,410.2 1091.1,419.4 1101.1,416.8 1106.2,418.1 1111.2,424.7 1121.3,448.6 1131.1,467.1 1136.1,472.4 1141.1,469.8 1151.2,464.5 1161.0,455.2 1170.0,443.3 1176.1,429.8 1186.2,411.3 1196.2,399.4 1206.0,387.4 1216.1,366.2 1226.1,347.7 1236.2,338.4 1246.3,333.1 1256.1,330.5 1261.1,331.8 1266.1,329.2 1271.2,326.5 1276.2,330.5 1281.2,337.1 1286.3,345.1 1291.3,353.0 1296.1,362.1 1306.0,377.0 1311.2,391.8 1316.3,395.8 1321.1,401.2 1326.3,416.1 1331.4,432.3 1336.2,444.4 1341.4,455.2" fill="none" stroke="#157fb6" stroke-width="2.3" stroke-linejoin="round" stroke-linecap="round" />
<polyline points="51.0,534.0 53.5,523.4 58.9,512.7 63.8,522.5 68.8,511.8 73.9,493.8 78.8,484.7 83.7,473.2 88.7,454.3 93.6,451.8 98.7,450.2 103.6,454.3 108.6,467.4 113.5,483.1 118.4,488.8 123.5,484.7 128.5,483.1 133.4,485.5 138.3,493.8 143.4,503.6 148.4,501.2 153.3,500.7 158.2,493.8 163.2,485.5 168.3,473.2 173.2,449.3 176.0,432.9 178.6,415.4 183.2,399.5 193.2,378.3 198.2,369.0 203.0,359.7 208.0,349.2 213.1,335.9 218.1,324.0 222.9,318.7 227.9,316.0 232.9,321.3 238.0,324.0 243.0,334.6 247.8,342.5 252.8,346.5 257.8,338.6 262.9,343.9 267.6,351.8 272.7,359.7 277.7,366.4 282.7,412.7 287.5,460.4 292.5,490.8 297.6,484.2 301.0,478.9 303.8,472.8 308.9,472.8 314.0,474.1 318.9,441.8 324.0,410.8 328.6,396.0 333.7,381.2 339.1,367.7 343.6,361.0 348.8,370.4 353.9,382.6 358.7,375.8 363.8,386.6 369.0,378.5 373.5,397.4 378.7,413.5 383.8,432.4 388.9,423.0 393.8,432.4 398.9,429.7 403.7,453.9 408.8,502.4 414.0,521.3 418.5,522.6 423.4,513.2 425.0,510.5 428.7,505.9 433.6,508.6 438.5,544.2 443.7,541.5 448.7,526.4 453.6,507.2 458.8,505.9 463.7,516.8 468.7,529.2 473.6,522.3 478.8,507.2 483.8,515.5 488.7,534.6 493.6,549.7 498.6,575.8 503.5,616.9 508.7,641.6 513.6,645.7 518.6,641.6 524.9,663.5 529.8,667.6 534.7,649.8 539.7,636.1 544.6,619.6 549.5,591.6 554.9,579.3 560.0,574.2 564.9,579.3 570.0,566.5 574.8,565.3 580.0,584.4 585.1,606.2 589.9,629.2 595.0,625.3 599.9,629.2 605.0,620.2 609.9,640.7 615.0,644.5 620.1,649.6 624.9,647.1 630.1,640.7 634.9,638.1 640.0,638.1 644.9,629.2 650.0,627.9 654.9,616.4 660.0,604.9 664.8,588.3 669.9,565.3 673.0,547.4 675.2,537.6 680.0,528.8 685.1,516.8 689.9,527.7 694.9,551.8 700.0,580.4 705.0,597.9 710.1,603.4 714.9,602.3 719.9,580.4 725.0,558.4 730.0,543.1 735.1,532.1 739.9,533.2 744.9,526.6 750.0,515.7 755.0,520.0 760.1,521.1 764.9,514.6 769.9,526.6 775.0,526.6 780.0,518.9 785.1,515.7 790.1,517.9 794.9,505.8 798.0,503.6 799.9,502.3 804.9,506.7 809.9,502.3 814.8,497.9 819.8,500.8 824.7,500.8 829.7,503.7 835.0,480.4 839.9,454.1 844.9,424.9 849.9,404.4 854.8,392.8 859.8,391.3 864.8,391.3 870.0,397.1 875.0,389.8 879.9,385.5 884.9,385.5 889.9,372.3 894.8,359.2 899.8,332.9 904.8,305.1 910.0,278.9 915.0,270.1 920.0,264.3 925.0,268.1 930.0,261.0 935.0,262.8 939.8,257.5 944.8,256.2 949.9,253.6 954.9,277.4 959.9,306.5 965.0,317.1 970.0,327.7 975.0,322.4 979.8,323.7 984.8,319.8 991.2,309.2 996.2,314.5 1001.0,325.1 1006.0,362.1 1011.0,391.3 1016.1,413.8 1021.1,423.1 1026.1,428.3 1031.2,431.0 1035.9,427.0 1041.0,435.0 1046.0,435.0 1051.1,439.3 1056.1,444.6 1061.2,439.3 1066.2,424.7 1071.2,416.8 1076.2,419.4 1081.0,434.0 1086.0,451.2 1091.1,453.9 1096.1,435.3 1101.1,422.1 1106.2,430.0 1111.2,444.6 1116.2,475.1 1121.3,520.1 1126.3,538.6 1131.1,532.0 1136.1,528.0 1141.1,508.2 1146.2,489.6 1151.2,471.1 1156.2,451.2 1161.0,443.3 1166.0,427.4 1170.0,403.6 1176.1,372.9 1181.1,364.9 1186.2,349.0 1191.2,346.4 1196.2,345.1 1201.2,337.1 1206.0,330.5 1211.0,309.3 1216.1,300.0 1221.1,281.5 1226.1,274.9 1231.2,280.2 1236.2,294.7 1241.2,301.4 1246.3,300.0 1251.0,304.0 1256.1,308.0 1261.1,323.9 1266.1,314.6 1271.2,309.3 1276.2,330.5 1281.2,358.3 1286.3,390.1 1291.3,403.3 1296.1,403.9 1301.2,416.1 1306.0,441.7 1311.2,471.4 1316.3,452.5 1321.1,460.6 1326.3,495.6 1331.4,530.7 1336.2,548.2 1341.4,542.8" fill="none" stroke="#b6e3f5" stroke-width="2.3" stroke-linejoin="round" stroke-linecap="round" />
<line x1="940" y1="361.6" x2="1303" y2="361.6" stroke="#c9c94c" stroke-width="2.2"/>
<line x1="1226" y1="221" x2="1310" y2="362" stroke="#c9c94c" stroke-width="2.2"/>
<text x="67.7" y="127.9" font-size="16.5" fill="#12d6da" text-anchor="start" font-weight="normal" textLength="298.3" lengthAdjust="spacingAndGlyphs" stroke="#12d6da" stroke-width="0.45">EMA (Price=CLOSE, Length=5, Displace=0)</text>
<text x="67.7" y="155.2" font-size="16.5" fill="#12d6da" text-anchor="start" font-weight="normal" textLength="307.3" lengthAdjust="spacingAndGlyphs" stroke="#12d6da" stroke-width="0.45">EMA (Price=CLOSE, Length=21, Displace=0)</text>
<text x="67.7" y="182.5" font-size="16.5" fill="#12d6da" text-anchor="start" font-weight="normal" textLength="307.3" lengthAdjust="spacingAndGlyphs" stroke="#12d6da" stroke-width="0.45">EMA (Price=CLOSE, Length=34, Displace=0)</text>
<line x1="51" y1="824.4" x2="1460" y2="824.4" stroke="#2d2d2d" stroke-width="1" stroke-dasharray="2.2,5.15"/>
<line x1="53.50" y1="863.3" x2="53.50" y2="854.8" stroke="#7014c0" stroke-width="1.7"/>
<line x1="58.51" y1="863.3" x2="58.51" y2="855.3" stroke="#7014c0" stroke-width="1.7"/>
<line x1="63.52" y1="863.3" x2="63.52" y2="857.9" stroke="#7014c0" stroke-width="1.7"/>
<line x1="68.53" y1="863.3" x2="68.53" y2="858.6" stroke="#7014c0" stroke-width="1.7"/>
<line x1="73.54" y1="863.3" x2="73.54" y2="859.1" stroke="#7014c0" stroke-width="1.7"/>
<line x1="78.55" y1="863.3" x2="78.55" y2="859.6" stroke="#7014c0" stroke-width="1.7"/>
<line x1="83.55" y1="863.3" x2="83.55" y2="860.0" stroke="#7014c0" stroke-width="1.7"/>
<line x1="88.56" y1="863.3" x2="88.56" y2="860.9" stroke="#7014c0" stroke-width="1.7"/>
<line x1="93.57" y1="863.3" x2="93.57" y2="861.7" stroke="#7014c0" stroke-width="1.7"/>
<line x1="98.58" y1="863.3" x2="98.58" y2="863.2" stroke="#7014c0" stroke-width="1.7"/>
<line x1="103.59" y1="863.3" x2="103.59" y2="864.0" stroke="#7014c0" stroke-width="1.7"/>
<line x1="108.60" y1="863.3" x2="108.60" y2="866.9" stroke="#7014c0" stroke-width="1.7"/>
<line x1="113.61" y1="863.3" x2="113.61" y2="869.1" stroke="#7014c0" stroke-width="1.7"/>
<line x1="118.62" y1="863.3" x2="118.62" y2="869.6" stroke="#7014c0" stroke-width="1.7"/>
<line x1="123.63" y1="863.3" x2="123.63" y2="869.9" stroke="#7014c0" stroke-width="1.7"/>
<line x1="128.63" y1="863.3" x2="128.63" y2="869.9" stroke="#7014c0" stroke-width="1.7"/>
<line x1="133.64" y1="863.3" x2="133.64" y2="870.0" stroke="#7014c0" stroke-width="1.7"/>
<line x1="138.65" y1="863.3" x2="138.65" y2="870.3" stroke="#7014c0" stroke-width="1.7"/>
<line x1="143.66" y1="863.3" x2="143.66" y2="870.7" stroke="#7014c0" stroke-width="1.7"/>
<line x1="148.67" y1="863.3" x2="148.67" y2="870.3" stroke="#7014c0" stroke-width="1.7"/>
<line x1="153.68" y1="863.3" x2="153.68" y2="870.0" stroke="#7014c0" stroke-width="1.7"/>
<line x1="158.69" y1="863.3" x2="158.69" y2="869.3" stroke="#7014c0" stroke-width="1.7"/>
<line x1="163.70" y1="863.3" x2="163.70" y2="868.4" stroke="#7014c0" stroke-width="1.7"/>
<line x1="168.71" y1="863.3" x2="168.71" y2="866.1" stroke="#7014c0" stroke-width="1.7"/>
<line x1="173.72" y1="863.3" x2="173.72" y2="863.3" stroke="#7014c0" stroke-width="1.7"/>
<line x1="178.73" y1="863.3" x2="178.73" y2="861.3" stroke="#7014c0" stroke-width="1.7"/>
<line x1="183.73" y1="863.3" x2="183.73" y2="860.5" stroke="#7014c0" stroke-width="1.7"/>
<line x1="188.74" y1="863.3" x2="188.74" y2="860.2" stroke="#7014c0" stroke-width="1.7"/>
<line x1="193.75" y1="863.3" x2="193.75" y2="859.7" stroke="#7014c0" stroke-width="1.7"/>
<line x1="198.76" y1="863.3" x2="198.76" y2="859.4" stroke="#7014c0" stroke-width="1.7"/>
<line x1="203.77" y1="863.3" x2="203.77" y2="859.2" stroke="#7014c0" stroke-width="1.7"/>
<line x1="208.78" y1="863.3" x2="208.78" y2="858.5" stroke="#7014c0" stroke-width="1.7"/>
<line x1="213.79" y1="863.3" x2="213.79" y2="858.1" stroke="#7014c0" stroke-width="1.7"/>
<line x1="218.80" y1="863.3" x2="218.80" y2="858.5" stroke="#7014c0" stroke-width="1.7"/>
<line x1="223.81" y1="863.3" x2="223.81" y2="859.7" stroke="#7014c0" stroke-width="1.7"/>
<line x1="228.81" y1="863.3" x2="228.81" y2="860.7" stroke="#7014c0" stroke-width="1.7"/>
<line x1="233.82" y1="863.3" x2="233.82" y2="862.4" stroke="#7014c0" stroke-width="1.7"/>
<line x1="238.83" y1="863.3" x2="238.83" y2="864.2" stroke="#7014c0" stroke-width="1.7"/>
<line x1="243.84" y1="863.3" x2="243.84" y2="866.0" stroke="#7014c0" stroke-width="1.7"/>
<line x1="248.85" y1="863.3" x2="248.85" y2="867.6" stroke="#7014c0" stroke-width="1.7"/>
<line x1="253.86" y1="863.3" x2="253.86" y2="868.8" stroke="#7014c0" stroke-width="1.7"/>
<line x1="258.87" y1="863.3" x2="258.87" y2="867.9" stroke="#7014c0" stroke-width="1.7"/>
<line x1="263.88" y1="863.3" x2="263.88" y2="869.2" stroke="#7014c0" stroke-width="1.7"/>
<line x1="268.89" y1="863.3" x2="268.89" y2="870.2" stroke="#7014c0" stroke-width="1.7"/>
<line x1="273.90" y1="863.3" x2="273.90" y2="870.8" stroke="#7014c0" stroke-width="1.7"/>
<line x1="278.91" y1="863.3" x2="278.91" y2="871.4" stroke="#7014c0" stroke-width="1.7"/>
<line x1="283.91" y1="863.3" x2="283.91" y2="877.0" stroke="#7014c0" stroke-width="1.7"/>
<line x1="288.92" y1="863.3" x2="288.92" y2="879.7" stroke="#7014c0" stroke-width="1.7"/>
<line x1="293.93" y1="863.3" x2="293.93" y2="880.2" stroke="#7014c0" stroke-width="1.7"/>
<line x1="298.94" y1="863.3" x2="298.94" y2="877.1" stroke="#7014c0" stroke-width="1.7"/>
<line x1="303.95" y1="863.3" x2="303.95" y2="874.6" stroke="#7014c0" stroke-width="1.7"/>
<line x1="308.96" y1="863.3" x2="308.96" y2="872.6" stroke="#7014c0" stroke-width="1.7"/>
<line x1="313.97" y1="863.3" x2="313.97" y2="871.3" stroke="#7014c0" stroke-width="1.7"/>
<line x1="318.98" y1="863.3" x2="318.98" y2="866.2" stroke="#7014c0" stroke-width="1.7"/>
<line x1="323.99" y1="863.3" x2="323.99" y2="862.6" stroke="#7014c0" stroke-width="1.7"/>
<line x1="329.00" y1="863.3" x2="329.00" y2="860.0" stroke="#7014c0" stroke-width="1.7"/>
<line x1="334.00" y1="863.3" x2="334.00" y2="858.4" stroke="#7014c0" stroke-width="1.7"/>
<line x1="339.01" y1="863.3" x2="339.01" y2="857.3" stroke="#7014c0" stroke-width="1.7"/>
<line x1="344.02" y1="863.3" x2="344.02" y2="856.8" stroke="#7014c0" stroke-width="1.7"/>
<line x1="349.03" y1="863.3" x2="349.03" y2="858.3" stroke="#7014c0" stroke-width="1.7"/>
<line x1="354.04" y1="863.3" x2="354.04" y2="860.3" stroke="#7014c0" stroke-width="1.7"/>
<line x1="359.05" y1="863.3" x2="359.05" y2="861.1" stroke="#7014c0" stroke-width="1.7"/>
<line x1="364.06" y1="863.3" x2="364.06" y2="861.3" stroke="#7014c0" stroke-width="1.7"/>
<line x1="369.07" y1="863.3" x2="369.07" y2="861.7" stroke="#7014c0" stroke-width="1.7"/>
<line x1="374.08" y1="863.3" x2="374.08" y2="863.9" stroke="#7014c0" stroke-width="1.7"/>
<line x1="379.09" y1="863.3" x2="379.09" y2="865.8" stroke="#7014c0" stroke-width="1.7"/>
<line x1="384.09" y1="863.3" x2="384.09" y2="868.4" stroke="#7014c0" stroke-width="1.7"/>
<line x1="389.10" y1="863.3" x2="389.10" y2="867.0" stroke="#7014c0" stroke-width="1.7"/>
<line x1="394.11" y1="863.3" x2="394.11" y2="866.0" stroke="#7014c0" stroke-width="1.7"/>
<line x1="399.12" y1="863.3" x2="399.12" y2="866.1" stroke="#7014c0" stroke-width="1.7"/>
<line x1="404.13" y1="863.3" x2="404.13" y2="869.1" stroke="#7014c0" stroke-width="1.7"/>
<line x1="409.14" y1="863.3" x2="409.14" y2="872.0" stroke="#7014c0" stroke-width="1.7"/>
<line x1="414.15" y1="863.3" x2="414.15" y2="872.8" stroke="#7014c0" stroke-width="1.7"/>
<line x1="419.16" y1="863.3" x2="419.16" y2="871.7" stroke="#7014c0" stroke-width="1.7"/>
<line x1="424.17" y1="863.3" x2="424.17" y2="869.8" stroke="#7014c0" stroke-width="1.7"/>
<line x1="429.18" y1="863.3" x2="429.18" y2="868.1" stroke="#7014c0" stroke-width="1.7"/>
<line x1="434.18" y1="863.3" x2="434.18" y2="867.5" stroke="#7014c0" stroke-width="1.7"/>
<line x1="439.19" y1="863.3" x2="439.19" y2="868.6" stroke="#7014c0" stroke-width="1.7"/>
<line x1="444.20" y1="863.3" x2="444.20" y2="867.1" stroke="#7014c0" stroke-width="1.7"/>
<line x1="449.21" y1="863.3" x2="449.21" y2="864.9" stroke="#7014c0" stroke-width="1.7"/>
<line x1="454.22" y1="863.3" x2="454.22" y2="862.1" stroke="#7014c0" stroke-width="1.7"/>
<line x1="459.23" y1="863.3" x2="459.23" y2="861.0" stroke="#7014c0" stroke-width="1.7"/>
<line x1="464.24" y1="863.3" x2="464.24" y2="862.1" stroke="#7014c0" stroke-width="1.7"/>
<line x1="469.25" y1="863.3" x2="469.25" y2="863.7" stroke="#7014c0" stroke-width="1.7"/>
<line x1="474.26" y1="863.3" x2="474.26" y2="862.5" stroke="#7014c0" stroke-width="1.7"/>
<line x1="479.27" y1="863.3" x2="479.27" y2="860.4" stroke="#7014c0" stroke-width="1.7"/>
<line x1="484.27" y1="863.3" x2="484.27" y2="862.2" stroke="#7014c0" stroke-width="1.7"/>
<line x1="489.28" y1="863.3" x2="489.28" y2="864.0" stroke="#7014c0" stroke-width="1.7"/>
<line x1="494.29" y1="863.3" x2="494.29" y2="865.6" stroke="#7014c0" stroke-width="1.7"/>
<line x1="499.30" y1="863.3" x2="499.30" y2="867.2" stroke="#7014c0" stroke-width="1.7"/>
<line x1="504.31" y1="863.3" x2="504.31" y2="869.3" stroke="#7014c0" stroke-width="1.7"/>
<line x1="509.32" y1="863.3" x2="509.32" y2="870.7" stroke="#7014c0" stroke-width="1.7"/>
<line x1="514.33" y1="863.3" x2="514.33" y2="868.8" stroke="#7014c0" stroke-width="1.7"/>
<line x1="519.34" y1="863.3" x2="519.34" y2="868.4" stroke="#7014c0" stroke-width="1.7"/>
<line x1="524.35" y1="863.3" x2="524.35" y2="868.6" stroke="#7014c0" stroke-width="1.7"/>
<line x1="529.36" y1="863.3" x2="529.36" y2="867.3" stroke="#7014c0" stroke-width="1.7"/>
<line x1="534.36" y1="863.3" x2="534.36" y2="865.1" stroke="#7014c0" stroke-width="1.7"/>
<line x1="539.37" y1="863.3" x2="539.37" y2="862.2" stroke="#7014c0" stroke-width="1.7"/>
<line x1="544.38" y1="863.3" x2="544.38" y2="859.2" stroke="#7014c0" stroke-width="1.7"/>
<line x1="549.39" y1="863.3" x2="549.39" y2="856.3" stroke="#7014c0" stroke-width="1.7"/>
<line x1="554.40" y1="863.3" x2="554.40" y2="854.9" stroke="#7014c0" stroke-width="1.7"/>
<line x1="559.41" y1="863.3" x2="559.41" y2="856.1" stroke="#7014c0" stroke-width="1.7"/>
<line x1="564.42" y1="863.3" x2="564.42" y2="856.8" stroke="#7014c0" stroke-width="1.7"/>
<line x1="569.43" y1="863.3" x2="569.43" y2="856.4" stroke="#7014c0" stroke-width="1.7"/>
<line x1="574.44" y1="863.3" x2="574.44" y2="855.9" stroke="#7014c0" stroke-width="1.7"/>
<line x1="579.45" y1="863.3" x2="579.45" y2="859.0" stroke="#7014c0" stroke-width="1.7"/>
<line x1="584.45" y1="863.3" x2="584.45" y2="862.1" stroke="#7014c0" stroke-width="1.7"/>
<line x1="589.46" y1="863.3" x2="589.46" y2="864.1" stroke="#7014c0" stroke-width="1.7"/>
<line x1="594.47" y1="863.3" x2="594.47" y2="864.4" stroke="#7014c0" stroke-width="1.7"/>
<line x1="599.48" y1="863.3" x2="599.48" y2="863.8" stroke="#7014c0" stroke-width="1.7"/>
<line x1="604.49" y1="863.3" x2="604.49" y2="862.9" stroke="#7014c0" stroke-width="1.7"/>
<line x1="609.50" y1="863.3" x2="609.50" y2="863.5" stroke="#7014c0" stroke-width="1.7"/>
<line x1="614.51" y1="863.3" x2="614.51" y2="863.7" stroke="#7014c0" stroke-width="1.7"/>
<line x1="619.52" y1="863.3" x2="619.52" y2="863.8" stroke="#7014c0" stroke-width="1.7"/>
<line x1="624.53" y1="863.3" x2="624.53" y2="863.3" stroke="#7014c0" stroke-width="1.7"/>
<line x1="629.54" y1="863.3" x2="629.54" y2="862.8" stroke="#7014c0" stroke-width="1.7"/>
<line x1="634.54" y1="863.3" x2="634.54" y2="862.4" stroke="#7014c0" stroke-width="1.7"/>
<line x1="639.55" y1="863.3" x2="639.55" y2="862.3" stroke="#7014c0" stroke-width="1.7"/>
<line x1="644.56" y1="863.3" x2="644.56" y2="862.0" stroke="#7014c0" stroke-width="1.7"/>
<line x1="649.57" y1="863.3" x2="649.57" y2="861.8" stroke="#7014c0" stroke-width="1.7"/>
<line x1="654.58" y1="863.3" x2="654.58" y2="861.1" stroke="#7014c0" stroke-width="1.7"/>
<line x1="659.59" y1="863.3" x2="659.59" y2="859.9" stroke="#7014c0" stroke-width="1.7"/>
<line x1="664.60" y1="863.3" x2="664.60" y2="859.0" stroke="#7014c0" stroke-width="1.7"/>
<line x1="669.61" y1="863.3" x2="669.61" y2="857.0" stroke="#7014c0" stroke-width="1.7"/>
<line x1="674.62" y1="863.3" x2="674.62" y2="852.1" stroke="#7014c0" stroke-width="1.7"/>
<line x1="679.62" y1="863.3" x2="679.62" y2="853.0" stroke="#7014c0" stroke-width="1.7"/>
<line x1="684.63" y1="863.3" x2="684.63" y2="854.5" stroke="#7014c0" stroke-width="1.7"/>
<line x1="689.64" y1="863.3" x2="689.64" y2="855.9" stroke="#7014c0" stroke-width="1.7"/>
<line x1="694.65" y1="863.3" x2="694.65" y2="860.6" stroke="#7014c0" stroke-width="1.7"/>
<line x1="699.66" y1="863.3" x2="699.66" y2="863.5" stroke="#7014c0" stroke-width="1.7"/>
<line x1="704.67" y1="863.3" x2="704.67" y2="865.4" stroke="#7014c0" stroke-width="1.7"/>
<line x1="709.68" y1="863.3" x2="709.68" y2="867.0" stroke="#7014c0" stroke-width="1.7"/>
<line x1="714.69" y1="863.3" x2="714.69" y2="867.1" stroke="#7014c0" stroke-width="1.7"/>
<line x1="719.70" y1="863.3" x2="719.70" y2="864.6" stroke="#7014c0" stroke-width="1.7"/>
<line x1="724.71" y1="863.3" x2="724.71" y2="863.0" stroke="#7014c0" stroke-width="1.7"/>
<line x1="729.72" y1="863.3" x2="729.72" y2="861.6" stroke="#7014c0" stroke-width="1.7"/>
<line x1="734.72" y1="863.3" x2="734.72" y2="861.2" stroke="#7014c0" stroke-width="1.7"/>
<line x1="739.73" y1="863.3" x2="739.73" y2="861.0" stroke="#7014c0" stroke-width="1.7"/>
<line x1="744.74" y1="863.3" x2="744.74" y2="860.8" stroke="#7014c0" stroke-width="1.7"/>
<line x1="749.75" y1="863.3" x2="749.75" y2="860.6" stroke="#7014c0" stroke-width="1.7"/>
<line x1="754.76" y1="863.3" x2="754.76" y2="861.2" stroke="#7014c0" stroke-width="1.7"/>
<line x1="759.77" y1="863.3" x2="759.77" y2="862.0" stroke="#7014c0" stroke-width="1.7"/>
<line x1="764.78" y1="863.3" x2="764.78" y2="862.8" stroke="#7014c0" stroke-width="1.7"/>
<line x1="769.79" y1="863.3" x2="769.79" y2="863.5" stroke="#7014c0" stroke-width="1.7"/>
<line x1="774.80" y1="863.3" x2="774.80" y2="864.1" stroke="#7014c0" stroke-width="1.7"/>
<line x1="779.81" y1="863.3" x2="779.81" y2="863.8" stroke="#7014c0" stroke-width="1.7"/>
<line x1="784.81" y1="863.3" x2="784.81" y2="863.5" stroke="#7014c0" stroke-width="1.7"/>
<line x1="789.82" y1="863.3" x2="789.82" y2="863.3" stroke="#7014c0" stroke-width="1.7"/>
<line x1="794.83" y1="863.3" x2="794.83" y2="863.3" stroke="#7014c0" stroke-width="1.7"/>
<line x1="799.84" y1="863.3" x2="799.84" y2="863.3" stroke="#7014c0" stroke-width="1.7"/>
<line x1="804.85" y1="863.3" x2="804.85" y2="863.3" stroke="#7014c0" stroke-width="1.7"/>
<line x1="809.86" y1="863.3" x2="809.86" y2="863.3" stroke="#7014c0" stroke-width="1.7"/>
<line x1="814.87" y1="863.3" x2="814.87" y2="863.3" stroke="#7014c0" stroke-width="1.7"/>
<line x1="819.88" y1="863.3" x2="819.88" y2="863.9" stroke="#7014c0" stroke-width="1.7"/>
<line x1="824.89" y1="863.3" x2="824.89" y2="864.4" stroke="#7014c0" stroke-width="1.7"/>
<line x1="829.90" y1="863.3" x2="829.90" y2="864.3" stroke="#7014c0" stroke-width="1.7"/>
<line x1="834.90" y1="863.3" x2="834.90" y2="862.6" stroke="#7014c0" stroke-width="1.7"/>
<line x1="839.91" y1="863.3" x2="839.91" y2="861.5" stroke="#7014c0" stroke-width="1.7"/>
<line x1="844.92" y1="863.3" x2="844.92" y2="860.3" stroke="#7014c0" stroke-width="1.7"/>
<line x1="849.93" y1="863.3" x2="849.93" y2="858.3" stroke="#7014c0" stroke-width="1.7"/>
<line x1="854.94" y1="863.3" x2="854.94" y2="856.3" stroke="#7014c0" stroke-width="1.7"/>
<line x1="859.95" y1="863.3" x2="859.95" y2="856.9" stroke="#7014c0" stroke-width="1.7"/>
<line x1="864.96" y1="863.3" x2="864.96" y2="858.2" stroke="#7014c0" stroke-width="1.7"/>
<line x1="869.97" y1="863.3" x2="869.97" y2="859.5" stroke="#7014c0" stroke-width="1.7"/>
<line x1="874.98" y1="863.3" x2="874.98" y2="860.7" stroke="#7014c0" stroke-width="1.7"/>
<line x1="879.99" y1="863.3" x2="879.99" y2="861.0" stroke="#7014c0" stroke-width="1.7"/>
<line x1="884.99" y1="863.3" x2="884.99" y2="860.9" stroke="#7014c0" stroke-width="1.7"/>
<line x1="890.00" y1="863.3" x2="890.00" y2="861.1" stroke="#7014c0" stroke-width="1.7"/>
<line x1="895.01" y1="863.3" x2="895.01" y2="861.3" stroke="#7014c0" stroke-width="1.7"/>
<line x1="900.02" y1="863.3" x2="900.02" y2="860.3" stroke="#7014c0" stroke-width="1.7"/>
<line x1="905.03" y1="863.3" x2="905.03" y2="859.2" stroke="#7014c0" stroke-width="1.7"/>
<line x1="910.04" y1="863.3" x2="910.04" y2="858.2" stroke="#7014c0" stroke-width="1.7"/>
<line x1="915.05" y1="863.3" x2="915.05" y2="857.8" stroke="#7014c0" stroke-width="1.7"/>
<line x1="920.06" y1="863.3" x2="920.06" y2="857.2" stroke="#7014c0" stroke-width="1.7"/>
<line x1="925.07" y1="863.3" x2="925.07" y2="859.5" stroke="#7014c0" stroke-width="1.7"/>
<line x1="930.08" y1="863.3" x2="930.08" y2="861.1" stroke="#7014c0" stroke-width="1.7"/>
<line x1="935.08" y1="863.3" x2="935.08" y2="861.8" stroke="#7014c0" stroke-width="1.7"/>
<line x1="940.09" y1="863.3" x2="940.09" y2="862.6" stroke="#7014c0" stroke-width="1.7"/>
<line x1="945.10" y1="863.3" x2="945.10" y2="863.7" stroke="#7014c0" stroke-width="1.7"/>
<line x1="950.11" y1="863.3" x2="950.11" y2="864.7" stroke="#7014c0" stroke-width="1.7"/>
<line x1="955.12" y1="863.3" x2="955.12" y2="866.8" stroke="#7014c0" stroke-width="1.7"/>
<line x1="960.13" y1="863.3" x2="960.13" y2="869.1" stroke="#7014c0" stroke-width="1.7"/>
<line x1="965.14" y1="863.3" x2="965.14" y2="871.0" stroke="#7014c0" stroke-width="1.7"/>
<line x1="970.15" y1="863.3" x2="970.15" y2="872.5" stroke="#7014c0" stroke-width="1.7"/>
<line x1="975.16" y1="863.3" x2="975.16" y2="871.9" stroke="#7014c0" stroke-width="1.7"/>
<line x1="980.17" y1="863.3" x2="980.17" y2="871.0" stroke="#7014c0" stroke-width="1.7"/>
<line x1="985.17" y1="863.3" x2="985.17" y2="870.7" stroke="#7014c0" stroke-width="1.7"/>
<line x1="990.18" y1="863.3" x2="990.18" y2="869.7" stroke="#7014c0" stroke-width="1.7"/>
<line x1="995.19" y1="863.3" x2="995.19" y2="869.0" stroke="#7014c0" stroke-width="1.7"/>
<line x1="1000.20" y1="863.3" x2="1000.20" y2="869.0" stroke="#7014c0" stroke-width="1.7"/>
<line x1="1005.21" y1="863.3" x2="1005.21" y2="871.4" stroke="#7014c0" stroke-width="1.7"/>
<line x1="1010.22" y1="863.3" x2="1010.22" y2="874.6" stroke="#7014c0" stroke-width="1.7"/>
<line x1="1015.23" y1="863.3" x2="1015.23" y2="876.2" stroke="#7014c0" stroke-width="1.7"/>
<line x1="1020.24" y1="863.3" x2="1020.24" y2="876.5" stroke="#7014c0" stroke-width="1.7"/>
<line x1="1025.25" y1="863.3" x2="1025.25" y2="874.9" stroke="#7014c0" stroke-width="1.7"/>
<line x1="1030.26" y1="863.3" x2="1030.26" y2="873.6" stroke="#7014c0" stroke-width="1.7"/>
<line x1="1035.26" y1="863.3" x2="1035.26" y2="871.9" stroke="#7014c0" stroke-width="1.7"/>
<line x1="1040.27" y1="863.3" x2="1040.27" y2="870.6" stroke="#7014c0" stroke-width="1.7"/>
<line x1="1045.28" y1="863.3" x2="1045.28" y2="869.4" stroke="#7014c0" stroke-width="1.7"/>
<line x1="1050.29" y1="863.3" x2="1050.29" y2="868.2" stroke="#7014c0" stroke-width="1.7"/>
<line x1="1055.30" y1="863.3" x2="1055.30" y2="867.2" stroke="#7014c0" stroke-width="1.7"/>
<line x1="1060.31" y1="863.3" x2="1060.31" y2="865.3" stroke="#7014c0" stroke-width="1.7"/>
<line x1="1065.32" y1="863.3" x2="1065.32" y2="863.7" stroke="#7014c0" stroke-width="1.7"/>
<line x1="1070.33" y1="863.3" x2="1070.33" y2="862.4" stroke="#7014c0" stroke-width="1.7"/>
<line x1="1075.34" y1="863.3" x2="1075.34" y2="862.5" stroke="#7014c0" stroke-width="1.7"/>
<line x1="1080.35" y1="863.3" x2="1080.35" y2="862.5" stroke="#7014c0" stroke-width="1.7"/>
<line x1="1085.35" y1="863.3" x2="1085.35" y2="863.5" stroke="#7014c0" stroke-width="1.7"/>
<line x1="1090.36" y1="863.3" x2="1090.36" y2="863.7" stroke="#7014c0" stroke-width="1.7"/>
<line x1="1095.37" y1="863.3" x2="1095.37" y2="862.3" stroke="#7014c0" stroke-width="1.7"/>
<line x1="1100.38" y1="863.3" x2="1100.38" y2="861.1" stroke="#7014c0" stroke-width="1.7"/>
<line x1="1105.39" y1="863.3" x2="1105.39" y2="861.3" stroke="#7014c0" stroke-width="1.7"/>
<line x1="1110.40" y1="863.3" x2="1110.40" y2="861.7" stroke="#7014c0" stroke-width="1.7"/>
<line x1="1115.41" y1="863.3" x2="1115.41" y2="865.5" stroke="#7014c0" stroke-width="1.7"/>
<line x1="1120.42" y1="863.3" x2="1120.42" y2="869.0" stroke="#7014c0" stroke-width="1.7"/>
<line x1="1125.43" y1="863.3" x2="1125.43" y2="870.3" stroke="#7014c0" stroke-width="1.7"/>
<line x1="1130.44" y1="863.3" x2="1130.44" y2="869.5" stroke="#7014c0" stroke-width="1.7"/>
<line x1="1135.44" y1="863.3" x2="1135.44" y2="868.4" stroke="#7014c0" stroke-width="1.7"/>
<line x1="1140.45" y1="863.3" x2="1140.45" y2="864.4" stroke="#7014c0" stroke-width="1.7"/>
<line x1="1145.46" y1="863.3" x2="1145.46" y2="860.9" stroke="#7014c0" stroke-width="1.7"/>
<line x1="1150.47" y1="863.3" x2="1150.47" y2="858.4" stroke="#7014c0" stroke-width="1.7"/>
<line x1="1155.48" y1="863.3" x2="1155.48" y2="856.9" stroke="#7014c0" stroke-width="1.7"/>
<line x1="1160.49" y1="863.3" x2="1160.49" y2="855.5" stroke="#7014c0" stroke-width="1.7"/>
<line x1="1165.50" y1="863.3" x2="1165.50" y2="854.1" stroke="#7014c0" stroke-width="1.7"/>
<line x1="1170.51" y1="863.3" x2="1170.51" y2="852.4" stroke="#7014c0" stroke-width="1.7"/>
<line x1="1175.52" y1="863.3" x2="1175.52" y2="850.6" stroke="#7014c0" stroke-width="1.7"/>
<line x1="1180.53" y1="863.3" x2="1180.53" y2="850.5" stroke="#7014c0" stroke-width="1.7"/>
<line x1="1185.53" y1="863.3" x2="1185.53" y2="850.8" stroke="#7014c0" stroke-width="1.7"/>
<line x1="1190.54" y1="863.3" x2="1190.54" y2="852.0" stroke="#7014c0" stroke-width="1.7"/>
<line x1="1195.55" y1="863.3" x2="1195.55" y2="853.6" stroke="#7014c0" stroke-width="1.7"/>
<line x1="1200.56" y1="863.3" x2="1200.56" y2="854.5" stroke="#7014c0" stroke-width="1.7"/>
<line x1="1205.57" y1="863.3" x2="1205.57" y2="854.3" stroke="#7014c0" stroke-width="1.7"/>
<line x1="1210.58" y1="863.3" x2="1210.58" y2="854.2" stroke="#7014c0" stroke-width="1.7"/>
<line x1="1215.59" y1="863.3" x2="1215.59" y2="854.4" stroke="#7014c0" stroke-width="1.7"/>
<line x1="1220.60" y1="863.3" x2="1220.60" y2="854.6" stroke="#7014c0" stroke-width="1.7"/>
<line x1="1225.61" y1="863.3" x2="1225.61" y2="855.8" stroke="#7014c0" stroke-width="1.7"/>
<line x1="1230.62" y1="863.3" x2="1230.62" y2="858.4" stroke="#7014c0" stroke-width="1.7"/>
<line x1="1235.62" y1="863.3" x2="1235.62" y2="861.5" stroke="#7014c0" stroke-width="1.7"/>
<line x1="1240.63" y1="863.3" x2="1240.63" y2="863.0" stroke="#7014c0" stroke-width="1.7"/>
<line x1="1245.64" y1="863.3" x2="1245.64" y2="863.8" stroke="#7014c0" stroke-width="1.7"/>
<line x1="1250.65" y1="863.3" x2="1250.65" y2="864.7" stroke="#7014c0" stroke-width="1.7"/>
<line x1="1255.66" y1="863.3" x2="1255.66" y2="865.5" stroke="#7014c0" stroke-width="1.7"/>
<line x1="1260.67" y1="863.3" x2="1260.67" y2="867.5" stroke="#7014c0" stroke-width="1.7"/>
<line x1="1265.68" y1="863.3" x2="1265.68" y2="867.4" stroke="#7014c0" stroke-width="1.7"/>
<line x1="1270.69" y1="863.3" x2="1270.69" y2="866.9" stroke="#7014c0" stroke-width="1.7"/>
<line x1="1275.70" y1="863.3" x2="1275.70" y2="869.1" stroke="#7014c0" stroke-width="1.7"/>
<line x1="1280.71" y1="863.3" x2="1280.71" y2="871.5" stroke="#7014c0" stroke-width="1.7"/>
<line x1="1285.71" y1="863.3" x2="1285.71" y2="873.7" stroke="#7014c0" stroke-width="1.7"/>
<line x1="1290.72" y1="863.3" x2="1290.72" y2="874.9" stroke="#7014c0" stroke-width="1.7"/>
<line x1="1295.73" y1="863.3" x2="1295.73" y2="873.9" stroke="#7014c0" stroke-width="1.7"/>
<line x1="1300.74" y1="863.3" x2="1300.74" y2="873.1" stroke="#7014c0" stroke-width="1.7"/>
<line x1="1305.75" y1="863.3" x2="1305.75" y2="873.1" stroke="#7014c0" stroke-width="1.7"/>
<line x1="1310.76" y1="863.3" x2="1310.76" y2="873.0" stroke="#7014c0" stroke-width="1.7"/>
<line x1="1315.77" y1="863.3" x2="1315.77" y2="873.3" stroke="#7014c0" stroke-width="1.7"/>
<line x1="1320.78" y1="863.3" x2="1320.78" y2="872.4" stroke="#7014c0" stroke-width="1.7"/>
<line x1="1325.79" y1="863.3" x2="1325.79" y2="873.4" stroke="#7014c0" stroke-width="1.7"/>
<line x1="1330.80" y1="863.3" x2="1330.80" y2="874.7" stroke="#7014c0" stroke-width="1.7"/>
<line x1="1335.80" y1="863.3" x2="1335.80" y2="875.5" stroke="#7014c0" stroke-width="1.7"/>
<line x1="1340.81" y1="863.3" x2="1340.81" y2="873.5" stroke="#7014c0" stroke-width="1.7"/>
<line x1="51" y1="863.3" x2="1341.5" y2="863.3" stroke="#c8c8c8" stroke-width="1.5"/>
<polyline points="51.3,837.1 58.2,833.8 66.4,833.0 76.3,830.0 87.8,827.7 99.2,826.4 109.1,828.1 120.6,831.3 132.1,835.4 143.6,839.5 155.1,843.7 164.9,846.1 178.0,845.8 189.5,842.8 204.3,839.5 212.5,838.7 224.0,835.4 235.5,835.0 247.0,836.6 260.1,839.5 273.2,842.8 283.1,847.4 291.3,854.3 300.0,861.7 306.6,865.8 316.4,868.3 327.9,868.3 339.4,865.8 349.2,862.5 362.4,860.6 373.9,860.6 385.4,862.5 398.5,865.0 408.3,869.1 418.2,873.2 431.3,876.5 444.5,879.8 457.6,879.8 470.7,878.9 480.6,877.6 487.1,876.5 498.6,878.6 513.4,884.7 533.1,889.6 542.9,888.8 550.0,887.2 558.2,882.2 566.4,878.9 574.6,875.7 584.5,874.3 597.6,874.0 609.1,874.8 620.6,876.5 632.1,875.7 643.6,874.0 656.7,870.7 668.2,868.3 676.4,865.0 684.6,860.1 694.5,856.8 704.3,858.4 714.1,859.2 720.7,860.1 730.6,857.6 740.4,856.3 753.5,854.6 763.4,853.0 774.9,853.5 788.0,853.5 800.0,853.5 823.0,853.5 831.2,854.6 842.7,851.9 855.8,847.8 875.5,842.8 885.4,842.5 895.2,841.2 908.3,838.7 918.2,834.6 928.0,832.2 939.5,831.3 951.0,832.2 964.1,837.1 980.6,844.5 993.7,847.8 1006.8,854.3 1023.2,863.8 1036.4,869.9 1050.0,874.8 1058.2,876.5 1071.3,875.7 1082.8,875.7 1091.0,876.5 1100.9,874.3 1112.4,874.8 1123.9,878.1 1141.9,882.2 1153.4,878.6 1164.9,874.8 1174.8,868.3 1186.2,862.5 1197.7,856.0 1207.6,853.0 1220.7,846.9 1237.1,842.8 1253.5,844.5 1270.0,847.4 1283.1,851.9 1292.9,857.6 1300.0,861.7 1311.6,868.3 1321.5,872.4 1331.3,878.9 1341.2,883.4" fill="none" stroke="#1a7fb5" stroke-width="1.5" stroke-linejoin="round" stroke-linecap="round" />
<polyline points="51.3,828.4 58.2,825.6 64.8,828.4 74.6,826.4 84.5,825.1 96.0,825.6 104.2,828.1 112.4,834.6 120.6,837.9 132.1,842.0 143.6,846.9 155.1,850.2 164.9,851.0 174.8,845.3 184.6,841.2 197.7,837.1 210.9,833.8 220.7,831.7 227.3,832.2 235.5,834.6 243.7,838.7 253.5,843.7 258.5,843.7 266.7,847.8 278.2,852.4 286.4,865.8 292.9,873.2 300.0,874.8 304.9,875.7 314.0,875.7 321.3,869.1 332.8,862.5 344.3,857.6 349.2,857.6 355.8,859.2 362.4,858.4 368.9,858.9 377.2,862.5 383.7,867.5 391.9,866.6 398.5,867.5 405.1,874.0 411.6,880.6 419.8,881.9 428.0,880.6 434.6,881.4 441.2,884.7 447.7,882.2 455.9,877.6 460.9,877.3 470.7,879.8 478.9,874.8 487.1,876.5 498.6,882.2 508.5,890.4 516.7,890.4 526.5,893.4 534.7,891.3 542.9,885.5 550.0,879.8 554.9,875.7 564.8,873.2 574.6,868.3 584.5,873.2 591.0,875.7 604.2,874.0 612.4,875.7 620.6,877.0 632.1,874.8 641.9,873.2 651.8,870.4 661.6,865.8 668.2,863.3 674.8,854.3 686.2,850.7 691.2,851.0 697.7,856.8 707.6,862.2 714.1,863.3 720.7,860.9 730.6,855.6 740.4,854.0 750.3,852.4 763.4,852.4 774.9,854.3 788.0,853.5 800.0,853.5 816.4,853.5 829.5,855.6 844.3,848.6 855.8,840.4 882.1,840.4 895.2,839.2 906.7,834.6 919.8,828.1 928.0,829.7 939.5,830.5 951.0,833.8 960.9,842.0 970.7,849.4 983.8,853.0 993.7,853.5 1001.9,857.6 1010.1,867.5 1018.3,874.8 1029.8,877.3 1050.0,879.8 1056.6,879.8 1069.7,874.8 1081.2,874.8 1089.4,877.3 1100.9,872.0 1110.7,873.2 1122.2,884.7 1127.2,885.8 1137.0,885.8 1150.1,874.8 1164.9,865.8 1176.4,854.3 1187.9,849.4 1202.7,845.8 1220.7,838.2 1227.3,838.2 1237.1,842.0 1247.0,844.5 1256.8,847.4 1261.8,850.7 1270.0,850.7 1279.8,858.4 1289.7,867.5 1300.0,871.6 1314.9,879.8 1321.5,881.4 1331.3,890.4 1336.2,893.4 1341.2,893.4" fill="none" stroke="#a80c14" stroke-width="1.5" stroke-linejoin="round" stroke-linecap="round" />
<text x="67.3" y="828.4" font-size="15.5" fill="#12d6da" text-anchor="start" font-weight="normal" textLength="616.5" lengthAdjust="spacingAndGlyphs" stroke="#12d6da" stroke-width="0.45">MACD (Fast length=12, Slow length=26, MACD length=9, Average type=EXPONENTIAL)</text>
<text x="696" y="828.4" font-size="15.5" fill="#b30d0d" text-anchor="start" font-weight="normal" textLength="39.4" lengthAdjust="spacingAndGlyphs" stroke="#b30d0d" stroke-width="0.45">Value</text>
<text x="747" y="828.4" font-size="15.5" fill="#1a7dbd" text-anchor="start" font-weight="normal" textLength="58.3" lengthAdjust="spacingAndGlyphs" stroke="#1a7dbd" stroke-width="0.45">Average</text>
<text x="815.8" y="828.4" font-size="15.5" fill="#3cc6c6" text-anchor="start" font-weight="normal" textLength="74.2" lengthAdjust="spacingAndGlyphs" stroke="#3cc6c6" stroke-width="0.45">Difference</text>
<text x="900.5" y="828.4" font-size="15.5" fill="#c4c4c4" text-anchor="start" font-weight="normal" textLength="62.5" lengthAdjust="spacingAndGlyphs" stroke="#c4c4c4" stroke-width="0.45">Zero line</text>
<line x1="51" y1="928.0" x2="1460" y2="928.0" stroke="#2d2d2d" stroke-width="1" stroke-dasharray="2.2,5.15"/>
<line x1="51" y1="979.5" x2="1460" y2="979.5" stroke="#2d2d2d" stroke-width="1" stroke-dasharray="2.2,5.15"/>
<line x1="51" y1="948.2" x2="1341.5" y2="948.2" stroke="#a80e0e" stroke-width="1.4"/>
<line x1="51" y1="1009.5" x2="1341.5" y2="1009.5" stroke="#a80e0e" stroke-width="1.4"/>
<polyline points="50.8,925.1 56.6,925.1 64.8,934.6 73.0,939.5 82.8,932.7 89.4,928.4 97.6,932.2 105.8,942.8 114.0,965.8 122.2,984.7 128.8,985.8 138.6,980.3 148.5,990.4 155.1,992.9 164.9,978.1 173.1,956.0 179.7,937.9 189.5,936.3 197.7,939.5 207.6,935.4 214.1,933.8 224.0,934.6 233.8,941.2 242.1,951.0 250.3,975.7 256.8,992.9 266.7,988.8 274.9,1001.9 283.1,1015.1 294.6,1023.3 300.0,1020.0 308.2,1000.3 316.4,990.4 324.6,978.9 332.8,962.5 344.3,943.7 349.2,943.7 357.5,953.5 364.0,961.7 372.2,969.1 380.4,978.9 388.6,1001.9 395.2,1011.0 408.3,1013.4 418.2,1022.0 424.8,1013.4 434.6,995.4 447.7,1001.1 457.6,978.9 464.1,974.0 472.4,978.9 478.9,975.7 485.5,965.8 490.4,966.6 495.3,978.9 505.2,1008.5 513.4,1020.0 529.8,1012.6 538.0,1010.1 550.0,987.2 558.2,970.7 564.8,960.9 569.7,954.3 574.6,953.0 579.5,954.3 586.1,965.8 596.0,990.4 600.9,994.5 605.8,988.0 615.7,991.3 620.6,998.6 630.4,1001.9 635.4,996.2 641.9,991.3 650.1,983.0 656.7,972.4 664.9,956.0 674.8,941.2 679.7,938.2 685.4,939.2 694.5,954.3 704.3,978.9 714.1,1003.6 720.7,997.8 735.5,962.5 740.4,959.2 750.3,957.6 761.8,949.1 770.0,950.7 779.8,954.3 789.7,956.0 794.6,957.6 800.0,961.2 809.8,963.3 819.7,961.7 832.8,964.2 839.4,957.6 846.0,942.0 854.2,931.3 862.4,936.3 873.9,950.2 880.4,951.9 891.9,942.8 903.4,935.9 913.3,934.6 921.5,940.4 934.6,953.5 944.5,955.1 949.4,954.3 957.6,965.8 964.1,982.2 974.0,1008.5 978.9,1006.8 985.5,998.6 997.0,988.0 1001.9,990.4 1010.1,1006.8 1020.0,1023.3 1026.5,1023.3 1038.0,1011.8 1044.6,1006.8 1050.0,1008.5 1059.8,1008.5 1066.4,998.6 1076.3,977.3 1081.2,970.7 1086.1,977.3 1092.7,990.4 1096.0,992.1 1100.9,982.2 1106.6,968.3 1110.7,968.3 1115.7,980.6 1123.9,1006.8 1130.4,1015.9 1136.2,1010.1 1141.9,995.4 1150.1,972.4 1156.7,962.5 1164.9,953.5 1171.5,946.9 1181.3,935.0 1186.2,933.3 1194.5,934.6 1205.9,937.9 1215.8,939.5 1222.4,939.5 1230.6,943.7 1235.5,949.4 1240.4,962.5 1247.0,978.9 1253.5,986.3 1261.8,993.7 1270.0,998.6 1276.5,996.2 1280.9,999.5 1288.3,1011.0 1295.3,1017.1 1300.9,1010.5 1306.7,1008.5 1318.2,1014.2 1328.0,1008.5 1336.2,1013.4 1341.5,1015.9" fill="none" stroke="#144fae" stroke-width="1.7" stroke-linejoin="round" stroke-linecap="round" />
<polyline points="50.8,925.1 56.6,926.4 63.1,940.4 73.0,940.4 79.5,931.0 87.8,928.4 92.7,930.5 99.2,937.9 107.5,954.3 114.0,977.3 118.9,990.4 128.8,978.6 133.7,978.1 143.6,994.5 153.4,990.8 160.0,976.5 164.9,969.9 171.5,947.8 178.0,933.8 189.5,940.4 197.7,938.2 205.9,935.4 214.1,933.3 224.0,935.4 230.6,941.2 238.8,953.0 247.0,982.2 253.5,1001.1 263.4,984.7 273.2,1010.1 283.1,1020.3 292.9,1025.7 300.0,1008.5 308.2,990.4 313.1,991.3 319.7,978.9 327.9,956.8 337.8,943.7 343.5,939.2 347.6,942.8 354.2,957.6 359.1,959.2 364.0,966.6 368.9,962.2 377.2,985.5 383.7,1013.4 388.6,1010.5 393.6,1013.4 398.5,1004.4 405.1,1017.5 413.3,1025.7 421.5,1009.3 429.7,992.1 433.8,992.1 439.5,1004.4 444.5,1004.4 452.7,974.8 458.4,970.7 469.1,984.7 478.9,961.7 483.8,960.9 492.1,992.1 498.6,1008.5 508.5,1024.6 520.0,1011.8 529.8,1014.7 536.4,1009.3 542.9,992.1 550.0,978.9 554.9,964.2 559.8,957.6 564.8,956.0 569.7,952.4 574.6,951.9 579.5,957.6 584.5,972.4 590.2,997.0 595.1,992.1 600.1,993.7 605.0,980.6 609.9,993.7 614.8,997.0 620.6,1008.5 625.5,1000.3 635.4,990.4 640.3,989.6 645.2,982.2 650.1,978.1 655.1,962.5 660.0,958.4 664.9,945.3 674.8,934.6 681.3,938.7 686.2,944.5 694.5,967.5 699.4,987.2 704.3,1000.3 710.0,1006.0 715.8,1000.3 724.0,978.9 728.9,962.5 735.5,956.0 740.4,959.2 745.3,958.4 751.9,952.7 760.1,946.9 766.7,951.0 774.9,956.0 779.8,956.0 784.7,951.9 789.7,959.2 800.0,962.2 809.8,965.8 819.7,960.6 824.6,962.5 830.4,971.1 837.8,949.4 845.1,930.5 852.5,931.0 860.7,939.5 869.8,954.3 880.4,950.2 888.6,942.8 900.1,933.3 906.7,935.9 918.2,940.4 924.8,950.2 934.6,956.3 939.5,953.5 944.5,956.0 949.4,954.3 957.6,977.3 964.1,1009.3 969.9,1013.4 977.3,1001.1 985.5,990.4 992.1,986.8 997.0,987.2 1001.9,993.7 1008.5,1011.8 1016.7,1025.7 1026.5,1022.9 1036.4,1008.5 1046.2,1004.4 1050.0,1007.7 1054.9,1009.3 1061.5,1004.4 1066.4,993.7 1071.3,974.8 1076.3,965.8 1081.2,970.7 1086.1,992.1 1091.0,1001.9 1096.0,979.8 1100.9,963.3 1106.6,960.9 1112.4,980.6 1117.3,1006.8 1122.2,1016.7 1126.3,1020.8 1132.1,1008.5 1140.3,985.5 1150.1,961.7 1156.7,956.8 1163.3,953.0 1169.8,945.3 1176.4,931.7 1186.2,933.0 1191.2,937.1 1197.7,937.1 1205.9,939.5 1211.7,937.1 1216.6,942.0 1221.5,938.7 1231.4,946.9 1237.1,965.0 1242.1,978.9 1247.0,988.0 1253.5,988.8 1256.8,990.4 1261.8,1001.9 1271.6,992.9 1276.8,995.8 1281.5,1006.8 1286.3,1022.4 1292.9,1013.4 1296.8,1009.3 1300.9,1006.8 1311.6,1021.3 1318.2,1010.1 1326.4,1005.5 1331.3,1016.7 1336.2,1019.7 1341.5,1010.5" fill="none" stroke="#b8b8b8" stroke-width="1.5" stroke-linejoin="round" stroke-linecap="round" />
<text x="67.3" y="928.4" font-size="15.5" fill="#12d6da" text-anchor="start" font-weight="normal" textLength="958.7" lengthAdjust="spacingAndGlyphs" stroke="#12d6da" stroke-width="0.45">Slow Stochastic (K Period=14, D Period=3, Overbought=80, Oversold=20, Average Type=SIMPLE, Length=3, Show Breakout Signals=No)</text>
<text x="1039.7" y="928.4" font-size="15.5" fill="#c4c4c4" text-anchor="start" font-weight="normal" textLength="47.7" lengthAdjust="spacingAndGlyphs" stroke="#c4c4c4" stroke-width="0.45">Slow K</text>
<text x="1097.3" y="928.4" font-size="15.5" fill="#1a55c0" text-anchor="start" font-weight="normal" textLength="47.2" lengthAdjust="spacingAndGlyphs" stroke="#1a55c0" stroke-width="0.45">Slow D</text>
<text x="1154.7" y="928.4" font-size="15.5" fill="#b30d0d" text-anchor="start" font-weight="normal" textLength="85.7" lengthAdjust="spacingAndGlyphs" stroke="#b30d0d" stroke-width="0.45">Overbought</text>
<text x="1252.2" y="928.4" font-size="15.5" fill="#b30d0d" text-anchor="start" font-weight="normal" textLength="62" lengthAdjust="spacingAndGlyphs" stroke="#b30d0d" stroke-width="0.45">Oversold</text>
<text x="1325.8" y="928.4" font-size="15.5" fill="#11c811" text-anchor="start" font-weight="normal" textLength="67.2" lengthAdjust="spacingAndGlyphs" stroke="#11c811" stroke-width="0.45">Up Signal</text>
<clipPath id="clipS"><rect x="51" y="911" width="1407.8" height="130"/></clipPath>
<text x="1403.7" y="928.4" font-size="15.5" fill="#e01010" text-anchor="start" font-weight="normal" textLength="88" lengthAdjust="spacingAndGlyphs" stroke="#e01010" stroke-width="0.45" clip-path="url(#clipS)">Down Signal</text>
<rect x="51" y="806.5" width="1460" height="5" fill="#383838"/>
<rect x="51" y="907" width="1460" height="5" fill="#383838"/>
<line x1="1460.3" y1="110.5" x2="1460.3" y2="806" stroke="#6e6e6e" stroke-width="1.6"/>
<line x1="1460.3" y1="811" x2="1460.3" y2="906.5" stroke="#6e6e6e" stroke-width="1.6"/>
<line x1="1460.3" y1="911.5" x2="1460.3" y2="1040" stroke="#6e6e6e" stroke-width="1.6"/>
<line x1="51" y1="1039.6" x2="1461" y2="1039.6" stroke="#6e6e6e" stroke-width="1.8"/>
<text x="1463.8" y="770.6" font-size="16.5" fill="#8a8a8a" text-anchor="start" font-weight="normal" textLength="15.8" lengthAdjust="spacingAndGlyphs" >68</text>
<text x="1463.8" y="700.9" font-size="16.5" fill="#8a8a8a" text-anchor="start" font-weight="normal" textLength="15.8" lengthAdjust="spacingAndGlyphs" >70</text>
<text x="1463.8" y="631.2" font-size="16.5" fill="#8a8a8a" text-anchor="start" font-weight="normal" textLength="15.8" lengthAdjust="spacingAndGlyphs" >72</text>
<text x="1463.8" y="561.5" font-size="16.5" fill="#8a8a8a" text-anchor="start" font-weight="normal" textLength="15.8" lengthAdjust="spacingAndGlyphs" >74</text>
<text x="1463.8" y="491.8" font-size="16.5" fill="#8a8a8a" text-anchor="start" font-weight="normal" textLength="15.8" lengthAdjust="spacingAndGlyphs" >76</text>
<text x="1463.8" y="422.1" font-size="16.5" fill="#8a8a8a" text-anchor="start" font-weight="normal" textLength="15.8" lengthAdjust="spacingAndGlyphs" >78</text>
<text x="1463.8" y="352.40000000000003" font-size="16.5" fill="#8a8a8a" text-anchor="start" font-weight="normal" textLength="15.8" lengthAdjust="spacingAndGlyphs" >80</text>
<text x="1463.8" y="282.7" font-size="16.5" fill="#8a8a8a" text-anchor="start" font-weight="normal" textLength="15.8" lengthAdjust="spacingAndGlyphs" >82</text>
<text x="1463.8" y="213.0" font-size="16.5" fill="#8a8a8a" text-anchor="start" font-weight="normal" textLength="15.8" lengthAdjust="spacingAndGlyphs" >84</text>
<text x="1463.8" y="143.3" font-size="16.5" fill="#8a8a8a" text-anchor="start" font-weight="normal" textLength="15.8" lengthAdjust="spacingAndGlyphs" >86</text>
<text x="1463.8" y="831.5" font-size="16.5" fill="#8a8a8a" text-anchor="start" font-weight="normal" textLength="8" lengthAdjust="spacingAndGlyphs" >2</text>
<text x="1463.8" y="934.5" font-size="16.5" fill="#8a8a8a" text-anchor="start" font-weight="normal" textLength="24.5" lengthAdjust="spacingAndGlyphs" >100</text>
<text x="1463.8" y="986" font-size="16.5" fill="#8a8a8a" text-anchor="start" font-weight="normal" textLength="15.8" lengthAdjust="spacingAndGlyphs" >50</text>
<rect x="1462.8" y="419.6" width="36.6" height="18.3" rx="3.5" fill="#0d3fb6"/>
<text x="1463.6" y="434.55" font-size="16" fill="#ffffff" text-anchor="start" font-weight="normal" textLength="35.1" lengthAdjust="spacingAndGlyphs" >77.61</text>
<rect x="1462.8" y="445.2" width="37.7" height="20.1" rx="3.5" fill="#1382bb"/>
<text x="1463.6" y="461.05" font-size="16" fill="#ffffff" text-anchor="start" font-weight="normal" textLength="36.2" lengthAdjust="spacingAndGlyphs" >76.86</text>
<rect x="1463.7" y="537.5" width="36.3" height="14.5" rx="3.5" fill="#b8e8fa"/>
<text x="1464.3" y="549" font-size="16" fill="#101820" text-anchor="start" font-weight="normal" textLength="35" lengthAdjust="spacingAndGlyphs" >74.37</text>
<rect x="1463.7" y="521" width="36.3" height="19.6" rx="3.5" fill="#2b9e56"/>
<text x="1464.5" y="536.5999999999999" font-size="16" fill="#000000" text-anchor="start" font-weight="normal" textLength="34.8" lengthAdjust="spacingAndGlyphs" >74.65</text>
<rect x="1463.3" y="852.4" width="28.5" height="19.7" rx="3.5" fill="#c2c2c2"/>
<text x="1464.1" y="868.05" font-size="16" fill="#111" text-anchor="start" font-weight="normal" textLength="27" lengthAdjust="spacingAndGlyphs" >0.00</text>
<rect x="1463.3" y="862.6" width="33.7" height="19.7" rx="3.5" fill="#7012c4"/>
<text x="1464.1" y="878.25" font-size="16" fill="#fff" text-anchor="start" font-weight="normal" textLength="33" lengthAdjust="spacingAndGlyphs" >-0.49</text>
<rect x="1463.3" y="872.7" width="33.5" height="19.7" rx="3.5" fill="#1a88c0"/>
<text x="1464.1" y="888.35" font-size="16" fill="#fff" text-anchor="start" font-weight="normal" textLength="33" lengthAdjust="spacingAndGlyphs" >-1.04</text>
<rect x="1463.3" y="882.8" width="34" height="19.7" rx="3.5" fill="#b00000"/>
<text x="1464.1" y="898.4499999999999" font-size="16" fill="#fff" text-anchor="start" font-weight="normal" textLength="33.5" lengthAdjust="spacingAndGlyphs" >-1.53</text>
<rect x="1463" y="940" width="37.8" height="17.7" rx="3.5" fill="#b00000"/>
<text x="1463.8" y="954.65" font-size="16" fill="#fff" text-anchor="start" font-weight="normal" textLength="36.5" lengthAdjust="spacingAndGlyphs" >80.00</text>
<rect x="1463" y="999.4" width="37.8" height="12" rx="4" fill="#b00000"/>
<rect x="1463" y="1012" width="37.8" height="13" rx="4" fill="#0d4fc0"/>
<rect x="1463" y="1001.4" width="37.8" height="19.8" rx="3.5" fill="#c4c4c4"/>
<text x="1463.8" y="1017.0999999999999" font-size="16" fill="#000" text-anchor="start" font-weight="normal" textLength="36.5" lengthAdjust="spacingAndGlyphs" >19.08</text>
<line x1="56.5" y1="1040" x2="56.5" y2="1045" stroke="#6e6e6e" stroke-width="1.4"/>
<line x1="171" y1="1040" x2="171" y2="1045" stroke="#6e6e6e" stroke-width="1.4"/>
<line x1="346.3" y1="1040" x2="346.3" y2="1045" stroke="#6e6e6e" stroke-width="1.4"/>
<line x1="486.2" y1="1040" x2="486.2" y2="1045" stroke="#6e6e6e" stroke-width="1.4"/>
<line x1="587.2" y1="1040" x2="587.2" y2="1045" stroke="#6e6e6e" stroke-width="1.4"/>
<line x1="792.5" y1="1040" x2="792.5" y2="1045" stroke="#6e6e6e" stroke-width="1.4"/>
<line x1="1003.9" y1="1040" x2="1003.9" y2="1045" stroke="#6e6e6e" stroke-width="1.4"/>
<line x1="1113.6" y1="1040" x2="1113.6" y2="1045" stroke="#6e6e6e" stroke-width="1.4"/>
<line x1="1318.5" y1="1040" x2="1318.5" y2="1045" stroke="#6e6e6e" stroke-width="1.4"/>
<line x1="1443.9" y1="1040" x2="1443.9" y2="1045" stroke="#6e6e6e" stroke-width="1.4"/>
<text x="55.699999999999996" y="1060" font-size="14.6" fill="#8a8a8a" text-anchor="start" font-weight="bold" textLength="41.5" lengthAdjust="spacingAndGlyphs" >AUG 1</text>
<text x="170.1" y="1060" font-size="14.6" fill="#8a8a8a" text-anchor="start" font-weight="bold" textLength="40" lengthAdjust="spacingAndGlyphs" >SEP 1</text>
<text x="345.2" y="1060" font-size="14.6" fill="#8a8a8a" text-anchor="start" font-weight="normal" textLength="51.2" lengthAdjust="spacingAndGlyphs" >OCT 23</text>
<text x="484.2" y="1060" font-size="14.6" fill="#8a8a8a" text-anchor="start" font-weight="bold" textLength="40.7" lengthAdjust="spacingAndGlyphs" >DEC 1</text>
<text x="585.6999999999999" y="1060" font-size="14.6" fill="#8a8a8a" text-anchor="start" font-weight="bold" textLength="33.8" lengthAdjust="spacingAndGlyphs" >2024</text>
<text x="791.1" y="1060" font-size="14.6" fill="#8a8a8a" text-anchor="start" font-weight="bold" textLength="44" lengthAdjust="spacingAndGlyphs" >MAR 1</text>
<text x="1002.8" y="1060" font-size="14.6" fill="#8a8a8a" text-anchor="start" font-weight="bold" textLength="42" lengthAdjust="spacingAndGlyphs" >MAY 1</text>
<text x="1112.7" y="1060" font-size="14.6" fill="#8a8a8a" text-anchor="start" font-weight="bold" textLength="40" lengthAdjust="spacingAndGlyphs" >JUN 3</text>
<text x="1317.4" y="1060" font-size="14.6" fill="#8a8a8a" text-anchor="start" font-weight="bold" textLength="41.5" lengthAdjust="spacingAndGlyphs" >AUG 1</text>
<text x="1442.3000000000002" y="1060" font-size="14.6" fill="#8a8a8a" text-anchor="start" font-weight="bold" textLength="40" lengthAdjust="spacingAndGlyphs" >SEP 1</text>
<rect x="51" y="1069" width="1460" height="19" fill="#353535"/>
<rect x="513.5" y="1069.5" width="977" height="18" fill="#474747" stroke="#5c5c5c" stroke-width="1"/>
<rect x="51.5" y="1069.5" width="19" height="18" fill="#383838" stroke="#5c5c5c" stroke-width="1"/>
<polygon points="63,1073.5 58.5,1077.5 63,1081.5" fill="#8a8a8a"/>
<rect x="1491.5" y="1069.5" width="18.5" height="18" fill="#383838" stroke="#5c5c5c" stroke-width="1"/>
<polygon points="1499,1073.5 1503.5,1077.5 1499,1081.5" fill="#8a8a8a"/>
<text x="62.8" y="99.2" font-size="15" fill="#7a7a7a" text-anchor="start" font-weight="normal" textLength="42.4" lengthAdjust="spacingAndGlyphs" >/CLU4</text>
<rect x="117.9" y="78.4" width="123.19999999999999" height="28.5" fill="#333333" stroke="#5a5a5a" stroke-width="1.3"/>
<path d="M136.84,101.46 A11.3,11.3 0 1 1 154.16,101.46 Q145.5,95.7 136.84,101.46 Z" fill="#c9c9cc"/>
<line x1="138.17" y1="98.10" x2="134.46" y2="100.07" stroke="#333333" stroke-width="1.3"/>
<line x1="137.25" y1="95.13" x2="133.08" y2="95.59" stroke="#333333" stroke-width="1.3"/>
<line x1="137.49" y1="92.02" x2="133.44" y2="90.92" stroke="#333333" stroke-width="1.3"/>
<line x1="138.85" y1="89.23" x2="135.49" y2="86.71" stroke="#333333" stroke-width="1.3"/>
<line x1="141.15" y1="87.13" x2="138.95" y2="83.55" stroke="#333333" stroke-width="1.3"/>
<line x1="144.06" y1="86.03" x2="143.33" y2="81.89" stroke="#333333" stroke-width="1.3"/>
<line x1="147.17" y1="86.07" x2="148.01" y2="81.96" stroke="#333333" stroke-width="1.3"/>
<line x1="150.04" y1="87.25" x2="152.34" y2="83.74" stroke="#333333" stroke-width="1.3"/>
<line x1="152.28" y1="89.42" x2="155.71" y2="86.99" stroke="#333333" stroke-width="1.3"/>
<line x1="153.57" y1="92.25" x2="157.65" y2="91.26" stroke="#333333" stroke-width="1.3"/>
<line x1="153.72" y1="95.36" x2="157.88" y2="95.94" stroke="#333333" stroke-width="1.3"/>
<line x1="152.72" y1="98.30" x2="156.37" y2="100.37" stroke="#333333" stroke-width="1.3"/>
<circle cx="145.5" cy="94.2" r="2.4" fill="#000"/>
<line x1="145.5" y1="94.2" x2="152.1" y2="86.4" stroke="#000" stroke-width="1.5"/>
<text x="163.3" y="99.2" font-size="15.5" fill="#9c9c9c" text-anchor="start" font-weight="normal" textLength="66.9" lengthAdjust="spacingAndGlyphs" >Indicators</text>
<rect x="255.3" y="76.0" width="85.69999999999999" height="32.900000000000006" fill="#303030" stroke="#5a5a5a" stroke-width="1.3"/>
<text x="262.3" y="99.2" font-size="15.5" fill="#8c8c8c" text-anchor="start" font-weight="normal" textLength="18.5" lengthAdjust="spacingAndGlyphs" >1D</text>
<polygon points="314.3,87.7 330.7,87.7 322.5,96.6" fill="#8c8c8c"/>
<rect x="348.0" y="76.0" width="85.60000000000002" height="32.900000000000006" fill="#303030" stroke="#5a5a5a" stroke-width="1.3"/>
<text x="355.4" y="99.2" font-size="15.5" fill="#8c8c8c" text-anchor="start" font-weight="normal" textLength="16.1" lengthAdjust="spacingAndGlyphs" >3Y</text>
<polygon points="407,87.7 423,87.7 415.0,96.6" fill="#8c8c8c"/>
<rect x="447.8" y="76.0" width="66.99999999999994" height="32.900000000000006" fill="#303030" stroke="#5a5a5a" stroke-width="1.3"/>
<line x1="459.8" y1="85" x2="459.8" y2="99" stroke="#c8d0d0" stroke-width="1.2"/>
<rect x="456.5" y="89.8" width="6.6" height="7.900000000000006" fill="#d8e0e0" stroke="#0d1a1a" stroke-width="0.7"/>
<line x1="467.7" y1="87.4" x2="467.7" y2="103.2" stroke="#c8d0d0" stroke-width="1.2"/>
<rect x="464.4" y="90.4" width="6.6" height="9.099999999999994" fill="#7e9696" stroke="#0d1a1a" stroke-width="0.7"/>
<line x1="475" y1="83.7" x2="475" y2="102" stroke="#c8d0d0" stroke-width="1.2"/>
<rect x="471.7" y="85.5" width="6.6" height="14.0" fill="#d8e0e0" stroke="#0d1a1a" stroke-width="0.7"/>
<polygon points="488.1,87.7 504.5,87.7 496.3,96.6" fill="#8c8c8c"/>
<rect x="516.8" y="77.4" width="33.5" height="31.5" fill="#222222" stroke="#5a5a5a" stroke-width="1.3"/>
<g transform="translate(533,92.7)">
<rect x="-2.3" y="-9" width="4.6" height="5" fill="#c7cfd2" transform="rotate(0)"/>
<rect x="-2.3" y="-9" width="4.6" height="5" fill="#c7cfd2" transform="rotate(45)"/>
<rect x="-2.3" y="-9" width="4.6" height="5" fill="#c7cfd2" transform="rotate(90)"/>
<rect x="-2.3" y="-9" width="4.6" height="5" fill="#c7cfd2" transform="rotate(135)"/>
<rect x="-2.3" y="-9" width="4.6" height="5" fill="#c7cfd2" transform="rotate(180)"/>
<rect x="-2.3" y="-9" width="4.6" height="5" fill="#c7cfd2" transform="rotate(225)"/>
<rect x="-2.3" y="-9" width="4.6" height="5" fill="#c7cfd2" transform="rotate(270)"/>
<rect x="-2.3" y="-9" width="4.6" height="5" fill="#c7cfd2" transform="rotate(315)"/>
<circle r="6.5" fill="#c7cfd2"/><circle r="2.8" fill="#222"/></g>
<rect x="564.1" y="76.0" width="62.0" height="32.900000000000006" fill="#303030" stroke="#5a5a5a" stroke-width="1.3"/>
<circle cx="582.7" cy="93" r="9.5" fill="#2f4a50" stroke="#5e7878" stroke-width="1.3"/>
<circle cx="582.7" cy="93" r="4.5" fill="none" stroke="#7a9090" stroke-width="1.2"/>
<line x1="571.4" y1="93" x2="594.1" y2="93" stroke="#a9b9b9" stroke-width="1.4"/>
<line x1="582.7" y1="81.5" x2="582.7" y2="104" stroke="#a9b9b9" stroke-width="1.4"/>
<rect x="584.5" y="81.4" width="9" height="8.5" fill="#c8c020" stroke="#6a6410" stroke-width="0.6"/>
<line x1="586" y1="84" x2="592" y2="84" stroke="#555" stroke-width="0.8"/><line x1="586" y1="86.3" x2="592" y2="86.3" stroke="#555" stroke-width="0.8"/>
<polygon points="599.6,87.7 615.8,87.7 607.7,96.6" fill="#8c8c8c"/>
<rect x="640.3" y="76.0" width="185.80000000000007" height="32.900000000000006" fill="#303030" stroke="#5a5a5a" stroke-width="1.3"/>
<path d="M658,84.8 L658,99.5 L661.5,96.3 L664.5,102.5 L667,101.3 L664.2,95.3 L669.5,95 Z" fill="#b8c8c8" stroke="#1a2a2a" stroke-width="0.8"/>
<text x="684.8" y="99.2" font-size="15.5" fill="#8c8c8c" text-anchor="start" font-weight="normal" textLength="52.5" lengthAdjust="spacingAndGlyphs" >No Tool</text>
<polygon points="799.4,87.7 815.5,87.7 807.45,96.6" fill="#8c8c8c"/>
<text x="1046.7" y="99.5" font-size="14" fill="#8a8a8a" text-anchor="start" font-weight="normal" >-</text>
<rect x="1057.6" y="88.7" width="238.3" height="8.9" rx="4.4" fill="#3a3a3a"/>
<rect x="1057.6" y="88.7" width="25.6" height="8.9" rx="3" fill="#7a7a7a"/>
<text x="1314.8" y="99.5" font-size="14" fill="#9a9a9a" text-anchor="start" font-weight="normal" >+</text>
<rect x="1342.9" y="75.4" width="73.09999999999991" height="34.0" fill="#333333" stroke="#5a5a5a" stroke-width="1.3"/>
<text x="1363.5" y="98.8" font-size="15.5" fill="#8c8c8c" text-anchor="start" font-weight="normal" textLength="32.5" lengthAdjust="spacingAndGlyphs" >Save</text>
<rect x="1430.0" y="75.8" width="74.20000000000005" height="33.7" fill="#333333" stroke="#5a5a5a" stroke-width="1.3"/>
<text x="1451.8" y="98.8" font-size="15.5" fill="#8c8c8c" text-anchor="start" font-weight="normal" textLength="32.5" lengthAdjust="spacingAndGlyphs" >Load</text>
<rect x="22" y="450.5" width="17" height="16.5" rx="2" fill="none" stroke="#707070" stroke-width="1.6"/>
<path d="M22,467 Q22,470.5 25,470.5 L39,470.5" fill="none" stroke="#707070" stroke-width="1.6"/>
<rect x="25.5" y="458" width="2.5" height="5" fill="#707070"/><rect x="29.3" y="455" width="2.5" height="8" fill="#707070"/><rect x="33" y="457" width="2.5" height="6" fill="#707070"/>
<rect x="19" y="486.1" width="2.8" height="2.8" fill="#707070"/><rect x="24" y="486.1" width="18.8" height="2.8" fill="#707070"/>
<rect x="19" y="492.0" width="2.8" height="2.8" fill="#707070"/><rect x="24" y="492.0" width="18.8" height="2.8" fill="#707070"/>
<rect x="19" y="497.90000000000003" width="2.8" height="2.8" fill="#707070"/><rect x="24" y="497.90000000000003" width="18.8" height="2.8" fill="#707070"/>
<rect x="19" y="503.8" width="2.8" height="2.8" fill="#707070"/><rect x="24" y="503.8" width="18.8" height="2.8" fill="#707070"/>
<rect x="22.5" y="529" width="19" height="14" rx="1.5" fill="none" stroke="#707070" stroke-width="1.5"/>
<line x1="27.5" y1="521.5" x2="30" y2="528.5" stroke="#707070" stroke-width="1.2"/><line x1="36" y1="521.5" x2="33.5" y2="528.5" stroke="#707070" stroke-width="1.2"/>
<line x1="24.5" y1="543" x2="24.5" y2="544.5" stroke="#707070" stroke-width="1.2"/><line x1="39.5" y1="543" x2="39.5" y2="544.5" stroke="#707070" stroke-width="1.2"/>
<rect x="12" y="553" width="37.7" height="36.7" fill="#1c1c1c"/>
<g stroke="#ffffff" stroke-width="1.5" fill="none">
<line x1="19.0" y1="560" x2="19.0" y2="584"/>
<line x1="19" y1="560.0" x2="43" y2="560.0"/>
<line x1="23.8" y1="560" x2="23.8" y2="584"/>
<line x1="19" y1="564.8" x2="43" y2="564.8"/>
<line x1="28.6" y1="560" x2="28.6" y2="584"/>
<line x1="19" y1="569.6" x2="43" y2="569.6"/>
<line x1="33.4" y1="560" x2="33.4" y2="584"/>
<line x1="19" y1="574.4" x2="43" y2="574.4"/>
<line x1="38.2" y1="560" x2="38.2" y2="584"/>
<line x1="19" y1="579.2" x2="43" y2="579.2"/>
<line x1="43.0" y1="560" x2="43.0" y2="584"/>
<line x1="19" y1="584.0" x2="43" y2="584.0"/>
</g>
<polyline points="19,583 31,572 43,561" fill="none" stroke="#fff" stroke-width="2.2"/><circle cx="43" cy="561" r="2.5" fill="#fff"/><circle cx="31" cy="572" r="2" fill="#fff"/>
<rect x="19.6" y="598.8" width="10.5" height="10.5" fill="#707070"/>
<rect x="31.5" y="598.8" width="10.5" height="10.5" fill="#707070"/>
<rect x="19.6" y="610.7" width="10.5" height="10.5" fill="#707070"/>
<rect x="31.5" y="610.7" width="10.5" height="10.5" fill="#707070"/>
<path d="M41,649 A11,11 0 1 1 38,637" fill="none" stroke="#707070" stroke-width="2.2"/>
<polygon points="43.5,649 36.5,651 42,656" fill="#707070"/>
<polyline points="30.5,646 36,640" fill="none" stroke="#707070" stroke-width="2"/><circle cx="30.5" cy="646" r="2" fill="#707070"/>
<path d="M12.7,694.6 Q13,686 19,684.5 Q16,682 17.5,678.5 Q19.5,675 22.5,677.5 Q24.5,680 23,683.5 L26,684.5 Q24,688 24,694.6 Z" fill="#707070"/>
<path d="M47.6,694.6 Q47.3,686 41.3,684.5 Q44.3,682 42.8,678.5 Q40.8,675 37.8,677.5 Q35.8,680 37.3,683.5 L34.3,684.5 Q36.3,688 36.3,694.6 Z" fill="#707070"/>
<path d="M20,694.6 Q20.5,684 26.5,682.5 Q23,679 24.5,675 Q26.5,671.5 30.2,671.5 Q33.9,671.5 35.9,675 Q37.4,679 33.9,682.5 Q39.9,684 40.4,694.6 Z" fill="#707070" stroke="#000" stroke-width="1"/>
<circle cx="30.2" cy="722.2" r="9.6" fill="#707070"/>
<text x="30.2" y="728.5" font-size="15" fill="#000000" text-anchor="middle" font-weight="bold" >?</text>
</svg>
</body></html>
